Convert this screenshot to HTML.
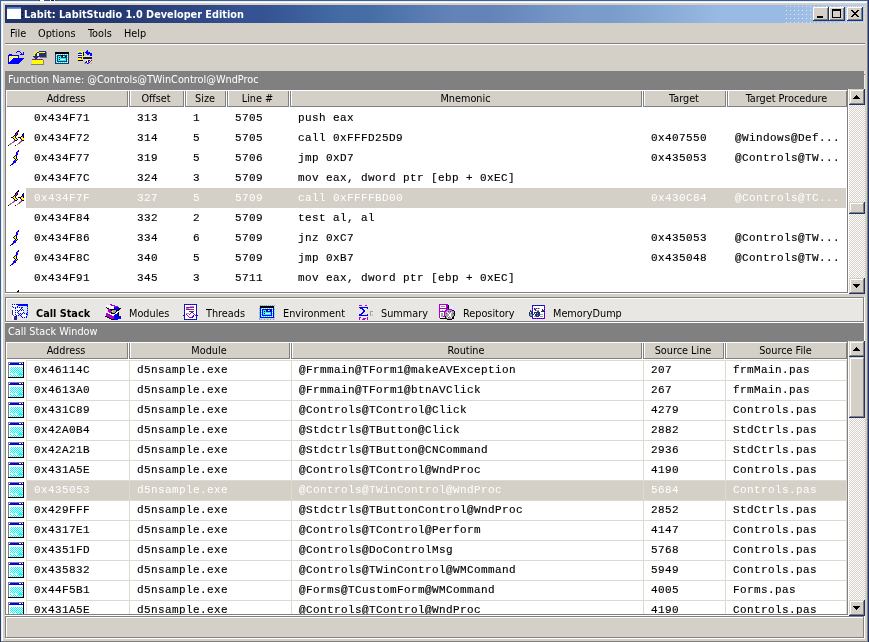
<!DOCTYPE html>
<html><head><meta charset="utf-8"><title>Labit: LabitStudio 1.0 Developer Edition</title>
<style>
html,body{margin:0;padding:0;background:#d4d0c8;}
#w{will-change:transform;position:relative;width:869px;height:642px;overflow:hidden;background:#d4d0c8;}
#w div,#w span,#w svg{position:absolute;}
#w span{white-space:pre;margin-left:-1px;line-height:14px;height:14px;display:block;}
#w .ui{font-family:"DejaVu Sans Condensed","Liberation Sans",sans-serif;font-size:10.8px;color:#000;margin-top:-10px;}
#w .ub{font-family:"DejaVu Sans Condensed","Liberation Sans",sans-serif;font-size:10.8px;font-weight:bold;color:#000;margin-top:-10px;}
#w .tb{font-family:"DejaVu Sans Condensed","Liberation Sans",sans-serif;font-size:10.8px;font-weight:bold;color:#fff;margin-top:-10px;}
#w .hc{text-align:center;}
#w .mo{font-family:"Liberation Mono",monospace;font-size:11px;letter-spacing:0.4px;color:#000;margin-top:-10px;margin-left:0;-webkit-text-stroke:0.15px;}
</style></head><body>
<div id="w">
<svg width="0" height="0" style="left:0;top:0"><defs><pattern id="d1" width="4" height="4" patternUnits="userSpaceOnUse"><rect x="1" y="1" width="1" height="1" fill="#e6e8ea"/></pattern><pattern id="d2" width="4" height="4" patternUnits="userSpaceOnUse"><rect x="1" y="1" width="1" height="1" fill="#e6e8ea"/><rect x="3" y="3" width="1" height="1" fill="#e6e8ea"/></pattern><pattern id="d3" width="2" height="2" patternUnits="userSpaceOnUse"><rect x="1" y="1" width="1" height="1" fill="#ece9d8"/></pattern><pattern id="ck" width="2" height="2" patternUnits="userSpaceOnUse"><rect width="2" height="2" fill="#fff"/><rect x="0" y="0" width="1" height="1" fill="#00ffff"/><rect x="1" y="1" width="1" height="1" fill="#00ffff"/></pattern></defs></svg>
<div style="left:0px;top:0px;width:869px;height:642px;background:#d4d0c8;"></div>
<div style="left:0px;top:0px;width:869px;height:1px;background:#3562a6;"></div>
<div style="left:0px;top:0px;width:1px;height:642px;background:linear-gradient(to bottom,#3562a6 0%,#3461a4 50%,#1e3c7c 100%);"></div>
<div style="left:1px;top:1px;width:866px;height:1px;background:#efebe0;"></div>
<div style="left:1px;top:1px;width:1px;height:640px;background:#efebe0;"></div>
<div style="left:2px;top:2px;width:865px;height:1px;background:#ffffff;"></div>
<div style="left:2px;top:2px;width:1px;height:639px;background:#ffffff;"></div>
<div style="left:867px;top:1px;width:1px;height:641px;background:#808080;"></div>
<div style="left:868px;top:0px;width:1px;height:642px;background:#21336a;"></div>
<div style="left:1px;top:641px;width:867px;height:1px;background:#808080;"></div>
<div style="left:39px;top:0px;width:1px;height:1px;background:#21336a;"></div>
<div style="left:40px;top:0px;width:4px;height:1px;background:#ffffff;"></div>
<div style="left:44px;top:0px;width:6px;height:1px;background:#2a4a90;"></div>
<div style="left:50px;top:0px;width:1px;height:1px;background:#e8eef8;"></div>
<div style="left:51px;top:0px;width:3px;height:1px;background:#0a1a5a;"></div>
<div style="left:54px;top:0px;width:1px;height:1px;background:#e8eef8;"></div>
<div style="left:55px;top:0px;width:2px;height:1px;background:#2a4a90;"></div>
<div style="left:5px;top:5px;width:860px;height:18px;background:linear-gradient(to right,#22346a 0px,#22346a 85px,#355293 245px,#355293 257px,#446da5 340px,#446da5 360px,#6484b9 450px,#6484b9 485px,#7a9ccb 580px,#7a9ccb 605px,#98bae3 717px,#98bae3 780px,#b2cbec 860px);"></div>
<svg style="left:785px;top:5px" width="80" height="18" viewBox="0 0 80 18" shape-rendering="crispEdges"><rect x="0" y="0" width="28" height="18" fill="url(#d1)"/><rect x="28" y="0" width="26" height="18" fill="url(#d2)"/><rect x="54" y="0" width="26" height="18" fill="url(#d3)"/></svg>
<div style="left:7px;top:7px;width:14px;height:12px;background:#ffffff;"></div>
<div style="left:7px;top:7px;width:14px;height:2px;background:linear-gradient(to bottom,#3f6db5,#7aa6e0);"></div>
<div style="left:22px;top:12px;width:1px;height:1px;background:#000;"></div>
<div style="left:22px;top:16px;width:1px;height:1px;background:#000;"></div>
<span class="tb" style="left:25px;top:18px;">Labit: LabitStudio 1.0 Developer Edition</span>
<div style="left:813px;top:7px;width:16px;height:14px;background:#d4d0c8;"></div>
<div style="left:813px;top:7px;width:15px;height:1px;background:#ffffff;"></div>
<div style="left:813px;top:7px;width:1px;height:13px;background:#ffffff;"></div>
<div style="left:814px;top:19px;width:14px;height:1px;background:#808080;"></div>
<div style="left:827px;top:8px;width:1px;height:12px;background:#808080;"></div>
<div style="left:813px;top:20px;width:16px;height:1px;background:#21336a;"></div>
<div style="left:828px;top:7px;width:1px;height:14px;background:#21336a;"></div>
<div style="left:829px;top:7px;width:16px;height:14px;background:#d4d0c8;"></div>
<div style="left:829px;top:7px;width:15px;height:1px;background:#ffffff;"></div>
<div style="left:829px;top:7px;width:1px;height:13px;background:#ffffff;"></div>
<div style="left:830px;top:19px;width:14px;height:1px;background:#808080;"></div>
<div style="left:843px;top:8px;width:1px;height:12px;background:#808080;"></div>
<div style="left:829px;top:20px;width:16px;height:1px;background:#21336a;"></div>
<div style="left:844px;top:7px;width:1px;height:14px;background:#21336a;"></div>
<div style="left:847px;top:7px;width:16px;height:14px;background:#d4d0c8;"></div>
<div style="left:847px;top:7px;width:15px;height:1px;background:#ffffff;"></div>
<div style="left:847px;top:7px;width:1px;height:13px;background:#ffffff;"></div>
<div style="left:848px;top:19px;width:14px;height:1px;background:#808080;"></div>
<div style="left:861px;top:8px;width:1px;height:12px;background:#808080;"></div>
<div style="left:847px;top:20px;width:16px;height:1px;background:#21336a;"></div>
<div style="left:862px;top:7px;width:1px;height:14px;background:#21336a;"></div>
<div style="left:817px;top:16px;width:6px;height:2px;background:#000;"></div>
<div style="left:832px;top:9px;width:9px;height:9px;background:#000;"></div>
<div style="left:833px;top:11px;width:7px;height:6px;background:#d4d0c8;"></div>
<svg style="left:851px;top:10px" width="8" height="7" viewBox="0 0 8 7" shape-rendering="crispEdges"><path d="M0 0h2v1h1v1h2v-1h1v-1h2v1h-1v1h-1v1h-1v1h1v1h1v1h1v1h-2v-1h-1v-1h-2v1h-1v1h-2v-1h1v-1h1v-1h1v-1h-1v-1h-1v-1h-1z" fill="#000"/></svg>
<span class="ui" style="left:11px;top:37px;">File</span>
<span class="ui" style="left:39px;top:37px;">Options</span>
<span class="ui" style="left:89px;top:37px;">Tools</span>
<span class="ui" style="left:125px;top:37px;">Help</span>
<div style="left:5px;top:43px;width:860px;height:1px;background:#808080;"></div>
<div style="left:5px;top:44px;width:860px;height:1px;background:#ffffff;"></div>
<div style="left:5px;top:71px;width:859px;height:19px;background:#808080;"></div>
<div style="left:864px;top:71px;width:1px;height:18px;background:#eeece6;"></div>
<div style="left:864px;top:74px;width:1px;height:1px;background:#808080;"></div>
<span class="ui" style="left:9px;top:83px;color:#ffffff;">Function Name: @Controls@TWinControl@WndProc</span>
<div style="left:5px;top:323px;width:859px;height:19px;background:#808080;"></div>
<div style="left:864px;top:323px;width:1px;height:18px;background:#ffffff;"></div>
<span class="ui" style="left:9px;top:335px;color:#ffffff;">Call Stack Window</span>
<div style="left:5px;top:89px;width:844px;height:205px;background:#ffffff;"></div>
<div style="left:5px;top:89px;width:844px;height:1px;background:#808080;"></div>
<div style="left:5px;top:89px;width:1px;height:205px;background:#808080;"></div>
<div style="left:6px;top:90px;width:842px;height:1px;background:#ffffff;"></div>
<div style="left:6px;top:90px;width:1px;height:203px;background:#ffffff;"></div>
<div style="left:6px;top:292px;width:842px;height:1px;background:#808080;"></div>
<div style="left:847px;top:90px;width:1px;height:203px;background:#808080;"></div>
<div style="left:5px;top:293px;width:844px;height:1px;background:#ffffff;"></div>
<div style="left:848px;top:89px;width:1px;height:205px;background:#ffffff;"></div>
<div style="left:7px;top:90px;width:840px;height:1px;background:#ffffff;"></div>
<div style="left:7px;top:91px;width:840px;height:15px;background:#d4d0c8;"></div>
<div style="left:7px;top:106px;width:840px;height:1px;background:#808080;"></div>
<div style="left:127px;top:91px;width:1px;height:16px;background:#808080;"></div>
<div style="left:128px;top:90px;width:1px;height:17px;background:#ffffff;"></div>
<div style="left:129px;top:91px;width:1px;height:16px;background:#808080;"></div>
<div style="left:130px;top:90px;width:1px;height:16px;background:#ffffff;"></div>
<div style="left:183px;top:91px;width:1px;height:16px;background:#808080;"></div>
<div style="left:184px;top:90px;width:1px;height:17px;background:#ffffff;"></div>
<div style="left:185px;top:91px;width:1px;height:16px;background:#808080;"></div>
<div style="left:186px;top:90px;width:1px;height:16px;background:#ffffff;"></div>
<div style="left:225px;top:91px;width:1px;height:16px;background:#808080;"></div>
<div style="left:226px;top:90px;width:1px;height:17px;background:#ffffff;"></div>
<div style="left:227px;top:91px;width:1px;height:16px;background:#808080;"></div>
<div style="left:228px;top:90px;width:1px;height:16px;background:#ffffff;"></div>
<div style="left:288px;top:91px;width:1px;height:16px;background:#808080;"></div>
<div style="left:289px;top:90px;width:1px;height:17px;background:#ffffff;"></div>
<div style="left:290px;top:91px;width:1px;height:16px;background:#808080;"></div>
<div style="left:291px;top:90px;width:1px;height:16px;background:#ffffff;"></div>
<div style="left:641px;top:91px;width:1px;height:16px;background:#808080;"></div>
<div style="left:642px;top:90px;width:1px;height:17px;background:#ffffff;"></div>
<div style="left:643px;top:91px;width:1px;height:16px;background:#808080;"></div>
<div style="left:644px;top:90px;width:1px;height:16px;background:#ffffff;"></div>
<div style="left:725px;top:91px;width:1px;height:16px;background:#808080;"></div>
<div style="left:726px;top:90px;width:1px;height:17px;background:#ffffff;"></div>
<div style="left:727px;top:91px;width:1px;height:16px;background:#808080;"></div>
<div style="left:728px;top:90px;width:1px;height:16px;background:#ffffff;"></div>
<div style="left:846px;top:91px;width:1px;height:16px;background:#808080;"></div>
<span class="ui hc" style="left:7px;width:120px;top:102px">Address</span>
<span class="ui hc" style="left:131px;width:52px;top:102px">Offset</span>
<span class="ui hc" style="left:187px;width:38px;top:102px">Size</span>
<span class="ui hc" style="left:229px;width:59px;top:102px">Line #</span>
<span class="ui hc" style="left:292px;width:349px;top:102px">Mnemonic</span>
<span class="ui hc" style="left:645px;width:80px;top:102px">Target</span>
<span class="ui hc" style="left:729px;width:117px;top:102px">Target Procedure</span>
<div style="left:849px;top:89px;width:16px;height:205px;background:#fff;background-image:conic-gradient(#d4d0c8 25%,#fff 0 50%,#d4d0c8 0 75%,#fff 0);background-size:2px 2px;"></div>
<div style="left:849px;top:89px;width:16px;height:16px;background:#d4d0c8;"></div>
<div style="left:849px;top:89px;width:15px;height:1px;background:#d4d0c8;"></div>
<div style="left:849px;top:89px;width:1px;height:15px;background:#d4d0c8;"></div>
<div style="left:850px;top:90px;width:13px;height:1px;background:#ffffff;"></div>
<div style="left:850px;top:90px;width:1px;height:13px;background:#ffffff;"></div>
<div style="left:850px;top:103px;width:14px;height:1px;background:#808080;"></div>
<div style="left:863px;top:90px;width:1px;height:14px;background:#808080;"></div>
<div style="left:849px;top:104px;width:16px;height:1px;background:#21336a;"></div>
<div style="left:864px;top:89px;width:1px;height:16px;background:#21336a;"></div>
<div style="left:849px;top:278px;width:16px;height:16px;background:#d4d0c8;"></div>
<div style="left:849px;top:278px;width:15px;height:1px;background:#d4d0c8;"></div>
<div style="left:849px;top:278px;width:1px;height:15px;background:#d4d0c8;"></div>
<div style="left:850px;top:279px;width:13px;height:1px;background:#ffffff;"></div>
<div style="left:850px;top:279px;width:1px;height:13px;background:#ffffff;"></div>
<div style="left:850px;top:292px;width:14px;height:1px;background:#808080;"></div>
<div style="left:863px;top:279px;width:1px;height:14px;background:#808080;"></div>
<div style="left:849px;top:293px;width:16px;height:1px;background:#21336a;"></div>
<div style="left:864px;top:278px;width:1px;height:16px;background:#21336a;"></div>
<div style="left:849px;top:202px;width:16px;height:12px;background:#d4d0c8;"></div>
<div style="left:849px;top:202px;width:15px;height:1px;background:#d4d0c8;"></div>
<div style="left:849px;top:202px;width:1px;height:11px;background:#d4d0c8;"></div>
<div style="left:850px;top:203px;width:13px;height:1px;background:#ffffff;"></div>
<div style="left:850px;top:203px;width:1px;height:9px;background:#ffffff;"></div>
<div style="left:850px;top:212px;width:14px;height:1px;background:#808080;"></div>
<div style="left:863px;top:203px;width:1px;height:10px;background:#808080;"></div>
<div style="left:849px;top:213px;width:16px;height:1px;background:#21336a;"></div>
<div style="left:864px;top:202px;width:1px;height:12px;background:#21336a;"></div>
<div style="left:856px;top:95px;width:1px;height:1px;background:#000;"></div>
<div style="left:856px;top:287px;width:1px;height:1px;background:#000;"></div>
<div style="left:855px;top:96px;width:3px;height:1px;background:#000;"></div>
<div style="left:855px;top:286px;width:3px;height:1px;background:#000;"></div>
<div style="left:854px;top:97px;width:5px;height:1px;background:#000;"></div>
<div style="left:854px;top:285px;width:5px;height:1px;background:#000;"></div>
<div style="left:853px;top:98px;width:7px;height:1px;background:#000;"></div>
<div style="left:853px;top:284px;width:7px;height:1px;background:#000;"></div>
<span class="mo" style="left:34px;top:121px;color:#000;">0x434F71</span>
<span class="mo" style="left:137px;top:121px;color:#000;">313</span>
<span class="mo" style="left:193px;top:121px;color:#000;">1</span>
<span class="mo" style="left:235px;top:121px;color:#000;">5705</span>
<span class="mo" style="left:298px;top:121px;color:#000;">push eax</span>
<svg style="left:8px;top:130px" width="16" height="16" viewBox="0 0 16 16" shape-rendering="crispEdges"><rect x="10" y="0" width="1" height="1" fill="#000000"/><rect x="9" y="1" width="2" height="1" fill="#000000"/><rect x="8" y="2" width="1" height="1" fill="#000000"/><rect x="9" y="2" width="1" height="1" fill="#d000d8"/><rect x="7" y="3" width="1" height="1" fill="#000000"/><rect x="8" y="3" width="1" height="1" fill="#d000d8"/><rect x="9" y="3" width="1" height="1" fill="#000000"/><rect x="15" y="3" width="1" height="1" fill="#000000"/><rect x="7" y="4" width="1" height="1" fill="#000000"/><rect x="8" y="4" width="1" height="1" fill="#d000d8"/><rect x="9" y="4" width="1" height="1" fill="#000000"/><rect x="14" y="4" width="1" height="1" fill="#000000"/><rect x="15" y="4" width="1" height="1" fill="#0000ff"/><rect x="6" y="5" width="1" height="1" fill="#000000"/><rect x="7" y="5" width="1" height="1" fill="#d000d8"/><rect x="8" y="5" width="1" height="1" fill="#000000"/><rect x="14" y="5" width="1" height="1" fill="#000000"/><rect x="15" y="5" width="1" height="1" fill="#0000ff"/><rect x="5" y="6" width="1" height="1" fill="#000000"/><rect x="6" y="6" width="1" height="1" fill="#ffff00"/><rect x="7" y="6" width="1" height="1" fill="#000000"/><rect x="13" y="6" width="1" height="1" fill="#000000"/><rect x="14" y="6" width="1" height="1" fill="#d000d8"/><rect x="15" y="6" width="1" height="1" fill="#000000"/><rect x="3" y="7" width="2" height="1" fill="#000000"/><rect x="5" y="7" width="2" height="1" fill="#ffff00"/><rect x="7" y="7" width="1" height="1" fill="#000000"/><rect x="10" y="7" width="3" height="1" fill="#000000"/><rect x="13" y="7" width="2" height="1" fill="#ffff00"/><rect x="15" y="7" width="1" height="1" fill="#000000"/><rect x="5" y="8" width="1" height="1" fill="#000000"/><rect x="6" y="8" width="2" height="1" fill="#ffff00"/><rect x="8" y="8" width="1" height="1" fill="#000000"/><rect x="12" y="8" width="1" height="1" fill="#000000"/><rect x="13" y="8" width="3" height="1" fill="#ffff00"/><rect x="6" y="9" width="1" height="1" fill="#000000"/><rect x="7" y="9" width="2" height="1" fill="#ffff00"/><rect x="9" y="9" width="1" height="1" fill="#000000"/><rect x="13" y="9" width="1" height="1" fill="#000000"/><rect x="14" y="9" width="2" height="1" fill="#ffff00"/><rect x="6" y="10" width="1" height="1" fill="#d000d8"/><rect x="7" y="10" width="2" height="1" fill="#000000"/><rect x="13" y="10" width="1" height="1" fill="#d000d8"/><rect x="14" y="10" width="2" height="1" fill="#000000"/><rect x="5" y="11" width="1" height="1" fill="#808080"/><rect x="6" y="11" width="1" height="1" fill="#d000d8"/><rect x="12" y="11" width="1" height="1" fill="#808080"/><rect x="13" y="11" width="1" height="1" fill="#d000d8"/><rect x="4" y="12" width="1" height="1" fill="#d000d8"/><rect x="5" y="12" width="1" height="1" fill="#808080"/><rect x="11" y="12" width="1" height="1" fill="#d000d8"/><rect x="12" y="12" width="1" height="1" fill="#808080"/><rect x="2" y="13" width="2" height="1" fill="#808080"/><rect x="10" y="13" width="2" height="1" fill="#808080"/><rect x="1" y="14" width="2" height="1" fill="#808080"/><rect x="9" y="14" width="1" height="1" fill="#808080"/><rect x="0" y="15" width="1" height="1" fill="#000000"/><rect x="7" y="15" width="1" height="1" fill="#000000"/></svg>
<span class="mo" style="left:34px;top:141px;color:#000;">0x434F72</span>
<span class="mo" style="left:137px;top:141px;color:#000;">314</span>
<span class="mo" style="left:193px;top:141px;color:#000;">5</span>
<span class="mo" style="left:235px;top:141px;color:#000;">5705</span>
<span class="mo" style="left:298px;top:141px;color:#000;">call 0xFFFD25D9</span>
<span class="mo" style="left:651px;top:141px;color:#000;">0x407550</span>
<span class="mo" style="left:735px;top:141px;color:#000;">@Windows@Def...</span>
<svg style="left:8px;top:150px" width="16" height="16" viewBox="0 0 16 16" shape-rendering="crispEdges"><rect x="10" y="0" width="1" height="1" fill="#0000ff"/><rect x="9" y="1" width="2" height="1" fill="#0000ff"/><rect x="8" y="2" width="1" height="1" fill="#0000ff"/><rect x="9" y="2" width="1" height="1" fill="#d000d8"/><rect x="8" y="3" width="2" height="1" fill="#0000ff"/><rect x="8" y="4" width="2" height="1" fill="#0000ff"/><rect x="7" y="5" width="2" height="1" fill="#0000ff"/><rect x="6" y="6" width="1" height="1" fill="#000000"/><rect x="7" y="6" width="1" height="1" fill="#ffff00"/><rect x="8" y="6" width="1" height="1" fill="#000000"/><rect x="5" y="7" width="1" height="1" fill="#000000"/><rect x="6" y="7" width="2" height="1" fill="#ffff00"/><rect x="8" y="7" width="1" height="1" fill="#000000"/><rect x="6" y="8" width="1" height="1" fill="#000000"/><rect x="7" y="8" width="1" height="1" fill="#ffff00"/><rect x="8" y="8" width="1" height="1" fill="#000000"/><rect x="7" y="9" width="1" height="1" fill="#000000"/><rect x="8" y="9" width="1" height="1" fill="#ffff00"/><rect x="9" y="9" width="1" height="1" fill="#000000"/><rect x="6" y="10" width="1" height="1" fill="#0000ff"/><rect x="7" y="10" width="1" height="1" fill="#d000d8"/><rect x="8" y="10" width="1" height="1" fill="#000000"/><rect x="5" y="11" width="3" height="1" fill="#0000ff"/><rect x="5" y="12" width="3" height="1" fill="#0000ff"/><rect x="4" y="13" width="2" height="1" fill="#0000ff"/><rect x="3" y="14" width="2" height="1" fill="#0000ff"/><rect x="2" y="15" width="1" height="1" fill="#000000"/></svg>
<span class="mo" style="left:34px;top:161px;color:#000;">0x434F77</span>
<span class="mo" style="left:137px;top:161px;color:#000;">319</span>
<span class="mo" style="left:193px;top:161px;color:#000;">5</span>
<span class="mo" style="left:235px;top:161px;color:#000;">5706</span>
<span class="mo" style="left:298px;top:161px;color:#000;">jmp 0xD7</span>
<span class="mo" style="left:651px;top:161px;color:#000;">0x435053</span>
<span class="mo" style="left:735px;top:161px;color:#000;">@Controls@TW...</span>
<span class="mo" style="left:34px;top:181px;color:#000;">0x434F7C</span>
<span class="mo" style="left:137px;top:181px;color:#000;">324</span>
<span class="mo" style="left:193px;top:181px;color:#000;">3</span>
<span class="mo" style="left:235px;top:181px;color:#000;">5709</span>
<span class="mo" style="left:298px;top:181px;color:#000;">mov eax, dword ptr [ebp + 0xEC]</span>
<div style="left:26px;top:188px;width:820px;height:20px;background:#d4d0c8;"></div>
<svg style="left:8px;top:190px" width="16" height="16" viewBox="0 0 16 16" shape-rendering="crispEdges"><rect x="10" y="0" width="1" height="1" fill="#000000"/><rect x="9" y="1" width="2" height="1" fill="#000000"/><rect x="8" y="2" width="1" height="1" fill="#000000"/><rect x="9" y="2" width="1" height="1" fill="#d000d8"/><rect x="7" y="3" width="1" height="1" fill="#000000"/><rect x="8" y="3" width="1" height="1" fill="#d000d8"/><rect x="9" y="3" width="1" height="1" fill="#000000"/><rect x="15" y="3" width="1" height="1" fill="#000000"/><rect x="7" y="4" width="1" height="1" fill="#000000"/><rect x="8" y="4" width="1" height="1" fill="#d000d8"/><rect x="9" y="4" width="1" height="1" fill="#000000"/><rect x="14" y="4" width="1" height="1" fill="#000000"/><rect x="15" y="4" width="1" height="1" fill="#0000ff"/><rect x="6" y="5" width="1" height="1" fill="#000000"/><rect x="7" y="5" width="1" height="1" fill="#d000d8"/><rect x="8" y="5" width="1" height="1" fill="#000000"/><rect x="14" y="5" width="1" height="1" fill="#000000"/><rect x="15" y="5" width="1" height="1" fill="#0000ff"/><rect x="5" y="6" width="1" height="1" fill="#000000"/><rect x="6" y="6" width="1" height="1" fill="#ffff00"/><rect x="7" y="6" width="1" height="1" fill="#000000"/><rect x="13" y="6" width="1" height="1" fill="#000000"/><rect x="14" y="6" width="1" height="1" fill="#d000d8"/><rect x="15" y="6" width="1" height="1" fill="#000000"/><rect x="3" y="7" width="2" height="1" fill="#000000"/><rect x="5" y="7" width="2" height="1" fill="#ffff00"/><rect x="7" y="7" width="1" height="1" fill="#000000"/><rect x="10" y="7" width="3" height="1" fill="#000000"/><rect x="13" y="7" width="2" height="1" fill="#ffff00"/><rect x="15" y="7" width="1" height="1" fill="#000000"/><rect x="5" y="8" width="1" height="1" fill="#000000"/><rect x="6" y="8" width="2" height="1" fill="#ffff00"/><rect x="8" y="8" width="1" height="1" fill="#000000"/><rect x="12" y="8" width="1" height="1" fill="#000000"/><rect x="13" y="8" width="3" height="1" fill="#ffff00"/><rect x="6" y="9" width="1" height="1" fill="#000000"/><rect x="7" y="9" width="2" height="1" fill="#ffff00"/><rect x="9" y="9" width="1" height="1" fill="#000000"/><rect x="13" y="9" width="1" height="1" fill="#000000"/><rect x="14" y="9" width="2" height="1" fill="#ffff00"/><rect x="6" y="10" width="1" height="1" fill="#d000d8"/><rect x="7" y="10" width="2" height="1" fill="#000000"/><rect x="13" y="10" width="1" height="1" fill="#d000d8"/><rect x="14" y="10" width="2" height="1" fill="#000000"/><rect x="5" y="11" width="1" height="1" fill="#808080"/><rect x="6" y="11" width="1" height="1" fill="#d000d8"/><rect x="12" y="11" width="1" height="1" fill="#808080"/><rect x="13" y="11" width="1" height="1" fill="#d000d8"/><rect x="4" y="12" width="1" height="1" fill="#d000d8"/><rect x="5" y="12" width="1" height="1" fill="#808080"/><rect x="11" y="12" width="1" height="1" fill="#d000d8"/><rect x="12" y="12" width="1" height="1" fill="#808080"/><rect x="2" y="13" width="2" height="1" fill="#808080"/><rect x="10" y="13" width="2" height="1" fill="#808080"/><rect x="1" y="14" width="2" height="1" fill="#808080"/><rect x="9" y="14" width="1" height="1" fill="#808080"/><rect x="0" y="15" width="1" height="1" fill="#000000"/><rect x="7" y="15" width="1" height="1" fill="#000000"/></svg>
<span class="mo" style="left:34px;top:201px;color:#fff;-webkit-text-stroke:0;">0x434F7F</span>
<span class="mo" style="left:137px;top:201px;color:#fff;-webkit-text-stroke:0;">327</span>
<span class="mo" style="left:193px;top:201px;color:#fff;-webkit-text-stroke:0;">5</span>
<span class="mo" style="left:235px;top:201px;color:#fff;-webkit-text-stroke:0;">5709</span>
<span class="mo" style="left:298px;top:201px;color:#fff;-webkit-text-stroke:0;">call 0xFFFFBD00</span>
<span class="mo" style="left:651px;top:201px;color:#fff;-webkit-text-stroke:0;">0x430C84</span>
<span class="mo" style="left:735px;top:201px;color:#fff;-webkit-text-stroke:0;">@Controls@TC...</span>
<span class="mo" style="left:34px;top:221px;color:#000;">0x434F84</span>
<span class="mo" style="left:137px;top:221px;color:#000;">332</span>
<span class="mo" style="left:193px;top:221px;color:#000;">2</span>
<span class="mo" style="left:235px;top:221px;color:#000;">5709</span>
<span class="mo" style="left:298px;top:221px;color:#000;">test al, al</span>
<svg style="left:8px;top:230px" width="16" height="16" viewBox="0 0 16 16" shape-rendering="crispEdges"><rect x="10" y="0" width="1" height="1" fill="#0000ff"/><rect x="9" y="1" width="2" height="1" fill="#0000ff"/><rect x="8" y="2" width="1" height="1" fill="#0000ff"/><rect x="9" y="2" width="1" height="1" fill="#d000d8"/><rect x="8" y="3" width="2" height="1" fill="#0000ff"/><rect x="8" y="4" width="2" height="1" fill="#0000ff"/><rect x="7" y="5" width="2" height="1" fill="#0000ff"/><rect x="6" y="6" width="1" height="1" fill="#000000"/><rect x="7" y="6" width="1" height="1" fill="#ffff00"/><rect x="8" y="6" width="1" height="1" fill="#000000"/><rect x="5" y="7" width="1" height="1" fill="#000000"/><rect x="6" y="7" width="2" height="1" fill="#ffff00"/><rect x="8" y="7" width="1" height="1" fill="#000000"/><rect x="6" y="8" width="1" height="1" fill="#000000"/><rect x="7" y="8" width="1" height="1" fill="#ffff00"/><rect x="8" y="8" width="1" height="1" fill="#000000"/><rect x="7" y="9" width="1" height="1" fill="#000000"/><rect x="8" y="9" width="1" height="1" fill="#ffff00"/><rect x="9" y="9" width="1" height="1" fill="#000000"/><rect x="6" y="10" width="1" height="1" fill="#0000ff"/><rect x="7" y="10" width="1" height="1" fill="#d000d8"/><rect x="8" y="10" width="1" height="1" fill="#000000"/><rect x="5" y="11" width="3" height="1" fill="#0000ff"/><rect x="5" y="12" width="3" height="1" fill="#0000ff"/><rect x="4" y="13" width="2" height="1" fill="#0000ff"/><rect x="3" y="14" width="2" height="1" fill="#0000ff"/><rect x="2" y="15" width="1" height="1" fill="#000000"/></svg>
<span class="mo" style="left:34px;top:241px;color:#000;">0x434F86</span>
<span class="mo" style="left:137px;top:241px;color:#000;">334</span>
<span class="mo" style="left:193px;top:241px;color:#000;">6</span>
<span class="mo" style="left:235px;top:241px;color:#000;">5709</span>
<span class="mo" style="left:298px;top:241px;color:#000;">jnz 0xC7</span>
<span class="mo" style="left:651px;top:241px;color:#000;">0x435053</span>
<span class="mo" style="left:735px;top:241px;color:#000;">@Controls@TW...</span>
<svg style="left:8px;top:250px" width="16" height="16" viewBox="0 0 16 16" shape-rendering="crispEdges"><rect x="10" y="0" width="1" height="1" fill="#0000ff"/><rect x="9" y="1" width="2" height="1" fill="#0000ff"/><rect x="8" y="2" width="1" height="1" fill="#0000ff"/><rect x="9" y="2" width="1" height="1" fill="#d000d8"/><rect x="8" y="3" width="2" height="1" fill="#0000ff"/><rect x="8" y="4" width="2" height="1" fill="#0000ff"/><rect x="7" y="5" width="2" height="1" fill="#0000ff"/><rect x="6" y="6" width="1" height="1" fill="#000000"/><rect x="7" y="6" width="1" height="1" fill="#ffff00"/><rect x="8" y="6" width="1" height="1" fill="#000000"/><rect x="5" y="7" width="1" height="1" fill="#000000"/><rect x="6" y="7" width="2" height="1" fill="#ffff00"/><rect x="8" y="7" width="1" height="1" fill="#000000"/><rect x="6" y="8" width="1" height="1" fill="#000000"/><rect x="7" y="8" width="1" height="1" fill="#ffff00"/><rect x="8" y="8" width="1" height="1" fill="#000000"/><rect x="7" y="9" width="1" height="1" fill="#000000"/><rect x="8" y="9" width="1" height="1" fill="#ffff00"/><rect x="9" y="9" width="1" height="1" fill="#000000"/><rect x="6" y="10" width="1" height="1" fill="#0000ff"/><rect x="7" y="10" width="1" height="1" fill="#d000d8"/><rect x="8" y="10" width="1" height="1" fill="#000000"/><rect x="5" y="11" width="3" height="1" fill="#0000ff"/><rect x="5" y="12" width="3" height="1" fill="#0000ff"/><rect x="4" y="13" width="2" height="1" fill="#0000ff"/><rect x="3" y="14" width="2" height="1" fill="#0000ff"/><rect x="2" y="15" width="1" height="1" fill="#000000"/></svg>
<span class="mo" style="left:34px;top:261px;color:#000;">0x434F8C</span>
<span class="mo" style="left:137px;top:261px;color:#000;">340</span>
<span class="mo" style="left:193px;top:261px;color:#000;">5</span>
<span class="mo" style="left:235px;top:261px;color:#000;">5709</span>
<span class="mo" style="left:298px;top:261px;color:#000;">jmp 0xB7</span>
<span class="mo" style="left:651px;top:261px;color:#000;">0x435048</span>
<span class="mo" style="left:735px;top:261px;color:#000;">@Controls@TW...</span>
<span class="mo" style="left:34px;top:281px;color:#000;">0x434F91</span>
<span class="mo" style="left:137px;top:281px;color:#000;">345</span>
<span class="mo" style="left:193px;top:281px;color:#000;">3</span>
<span class="mo" style="left:235px;top:281px;color:#000;">5711</span>
<span class="mo" style="left:298px;top:281px;color:#000;">mov eax, dword ptr [ebp + 0xEC]</span>
<div style="left:17px;top:291px;width:2px;height:1px;background:#000;"></div>
<div style="left:18px;top:290px;width:1px;height:1px;background:#000;"></div>
<div style="left:5px;top:297px;width:860px;height:26px;background:#e9e7e3;"></div>
<div style="left:5px;top:297px;width:860px;height:1px;background:#808080;"></div>
<div style="left:5px;top:297px;width:1px;height:26px;background:#808080;"></div>
<div style="left:6px;top:298px;width:858px;height:1px;background:#ffffff;"></div>
<div style="left:6px;top:298px;width:1px;height:24px;background:#ffffff;"></div>
<div style="left:6px;top:321px;width:858px;height:1px;background:#808080;"></div>
<div style="left:863px;top:298px;width:1px;height:24px;background:#808080;"></div>
<div style="left:5px;top:322px;width:860px;height:1px;background:#ffffff;"></div>
<div style="left:864px;top:297px;width:1px;height:26px;background:#ffffff;"></div>
<svg style="left:12px;top:304px" width="16" height="16" viewBox="0 0 16 16" shape-rendering="crispEdges"><rect x="0" y="0" width="1" height="1" fill="#0000ff"/><rect x="1" y="0" width="1" height="1" fill="#dce8fa"/><rect x="2" y="0" width="1" height="1" fill="#0000ff"/><rect x="3" y="0" width="1" height="1" fill="#dce8fa"/><rect x="4" y="0" width="12" height="1" fill="#0000ff"/><rect x="0" y="1" width="1" height="1" fill="#dce8fa"/><rect x="1" y="1" width="4" height="1" fill="#ffffff"/><rect x="5" y="1" width="1" height="1" fill="#dce8fa"/><rect x="6" y="1" width="10" height="1" fill="#0000ff"/><rect x="0" y="2" width="1" height="1" fill="#0000ff"/><rect x="1" y="2" width="4" height="1" fill="#ffffff"/><rect x="5" y="2" width="1" height="1" fill="#0000ff"/><rect x="6" y="2" width="9" height="1" fill="#dce8fa"/><rect x="15" y="2" width="1" height="1" fill="#0000ff"/><rect x="0" y="3" width="1" height="1" fill="#dce8fa"/><rect x="1" y="3" width="1" height="1" fill="#0000ff"/><rect x="2" y="3" width="1" height="1" fill="#dce8fa"/><rect x="3" y="3" width="1" height="1" fill="#0000ff"/><rect x="4" y="3" width="1" height="1" fill="#dce8fa"/><rect x="5" y="3" width="1" height="1" fill="#0000ff"/><rect x="6" y="3" width="1" height="1" fill="#dce8fa"/><rect x="7" y="3" width="1" height="1" fill="#0000ff"/><rect x="8" y="3" width="1" height="1" fill="#dce8fa"/><rect x="9" y="3" width="2" height="1" fill="#21336a"/><rect x="11" y="3" width="4" height="1" fill="#dce8fa"/><rect x="15" y="3" width="1" height="1" fill="#78a8f0"/><rect x="0" y="4" width="3" height="1" fill="#ffffff"/><rect x="3" y="4" width="1" height="1" fill="#0000ff"/><rect x="4" y="4" width="4" height="1" fill="#ffffff"/><rect x="8" y="4" width="1" height="1" fill="#dce8fa"/><rect x="9" y="4" width="1" height="1" fill="#21336a"/><rect x="10" y="4" width="5" height="1" fill="#dce8fa"/><rect x="15" y="4" width="1" height="1" fill="#0000ff"/><rect x="0" y="5" width="3" height="1" fill="#ffffff"/><rect x="3" y="5" width="1" height="1" fill="#dce8fa"/><rect x="4" y="5" width="4" height="1" fill="#ffffff"/><rect x="8" y="5" width="1" height="1" fill="#0000ff"/><rect x="9" y="5" width="1" height="1" fill="#dce8fa"/><rect x="10" y="5" width="1" height="1" fill="#21336a"/><rect x="11" y="5" width="4" height="1" fill="#dce8fa"/><rect x="15" y="5" width="1" height="1" fill="#78a8f0"/><rect x="0" y="6" width="1" height="1" fill="#21336a"/><rect x="1" y="6" width="2" height="1" fill="#ffffff"/><rect x="3" y="6" width="1" height="1" fill="#0000ff"/><rect x="4" y="6" width="1" height="1" fill="#dce8fa"/><rect x="5" y="6" width="1" height="1" fill="#0000ff"/><rect x="6" y="6" width="1" height="1" fill="#dce8fa"/><rect x="7" y="6" width="1" height="1" fill="#0000ff"/><rect x="8" y="6" width="1" height="1" fill="#dce8fa"/><rect x="9" y="6" width="1" height="1" fill="#0000ff"/><rect x="10" y="6" width="1" height="1" fill="#dce8fa"/><rect x="11" y="6" width="1" height="1" fill="#21336a"/><rect x="12" y="6" width="3" height="1" fill="#dce8fa"/><rect x="15" y="6" width="1" height="1" fill="#0000ff"/><rect x="0" y="7" width="1" height="1" fill="#21336a"/><rect x="1" y="7" width="2" height="1" fill="#ffffff"/><rect x="3" y="7" width="1" height="1" fill="#dce8fa"/><rect x="4" y="7" width="2" height="1" fill="#ffffff"/><rect x="6" y="7" width="1" height="1" fill="#0000ff"/><rect x="7" y="7" width="4" height="1" fill="#ffffff"/><rect x="11" y="7" width="4" height="1" fill="#dce8fa"/><rect x="15" y="7" width="1" height="1" fill="#78a8f0"/><rect x="0" y="8" width="1" height="1" fill="#21336a"/><rect x="1" y="8" width="2" height="1" fill="#ffffff"/><rect x="3" y="8" width="1" height="1" fill="#0000ff"/><rect x="4" y="8" width="1" height="1" fill="#ffffff"/><rect x="5" y="8" width="1" height="1" fill="#21336a"/><rect x="6" y="8" width="1" height="1" fill="#dce8fa"/><rect x="7" y="8" width="4" height="1" fill="#ffffff"/><rect x="11" y="8" width="1" height="1" fill="#0000ff"/><rect x="12" y="8" width="3" height="1" fill="#dce8fa"/><rect x="15" y="8" width="1" height="1" fill="#0000ff"/><rect x="0" y="9" width="1" height="1" fill="#21336a"/><rect x="1" y="9" width="2" height="1" fill="#ffffff"/><rect x="3" y="9" width="1" height="1" fill="#dce8fa"/><rect x="4" y="9" width="2" height="1" fill="#ffffff"/><rect x="6" y="9" width="1" height="1" fill="#0000ff"/><rect x="7" y="9" width="1" height="1" fill="#dce8fa"/><rect x="8" y="9" width="1" height="1" fill="#0000ff"/><rect x="9" y="9" width="1" height="1" fill="#dce8fa"/><rect x="10" y="9" width="1" height="1" fill="#0000ff"/><rect x="11" y="9" width="1" height="1" fill="#dce8fa"/><rect x="12" y="9" width="1" height="1" fill="#0000ff"/><rect x="13" y="9" width="1" height="1" fill="#dce8fa"/><rect x="14" y="9" width="1" height="1" fill="#0000ff"/><rect x="15" y="9" width="1" height="1" fill="#78a8f0"/><rect x="0" y="10" width="1" height="1" fill="#21336a"/><rect x="1" y="10" width="2" height="1" fill="#ffffff"/><rect x="3" y="10" width="1" height="1" fill="#0000ff"/><rect x="4" y="10" width="2" height="1" fill="#ffffff"/><rect x="6" y="10" width="1" height="1" fill="#dce8fa"/><rect x="7" y="10" width="1" height="1" fill="#0000ff"/><rect x="8" y="10" width="1" height="1" fill="#dce8fa"/><rect x="9" y="10" width="1" height="1" fill="#0000ff"/><rect x="10" y="10" width="4" height="1" fill="#ffffff"/><rect x="14" y="10" width="2" height="1" fill="#0000ff"/><rect x="0" y="11" width="1" height="1" fill="#ffffff"/><rect x="1" y="11" width="1" height="1" fill="#d000d8"/><rect x="2" y="11" width="1" height="1" fill="#ffffff"/><rect x="3" y="11" width="1" height="1" fill="#dce8fa"/><rect x="4" y="11" width="1" height="1" fill="#0000ff"/><rect x="5" y="11" width="1" height="1" fill="#dce8fa"/><rect x="6" y="11" width="1" height="1" fill="#0000ff"/><rect x="7" y="11" width="1" height="1" fill="#dce8fa"/><rect x="8" y="11" width="1" height="1" fill="#0000ff"/><rect x="9" y="11" width="1" height="1" fill="#dce8fa"/><rect x="10" y="11" width="4" height="1" fill="#ffffff"/><rect x="14" y="11" width="1" height="1" fill="#dce8fa"/><rect x="15" y="11" width="1" height="1" fill="#78a8f0"/><rect x="0" y="12" width="2" height="1" fill="#ffffff"/><rect x="2" y="12" width="1" height="1" fill="#d000d8"/><rect x="3" y="12" width="2" height="1" fill="#0000ff"/><rect x="9" y="12" width="1" height="1" fill="#0000ff"/><rect x="10" y="12" width="4" height="1" fill="#ffffff"/><rect x="14" y="12" width="1" height="1" fill="#0000ff"/><rect x="0" y="13" width="2" height="1" fill="#ffffff"/><rect x="2" y="13" width="2" height="1" fill="#21336a"/><rect x="4" y="13" width="1" height="1" fill="#0000ff"/><rect x="9" y="13" width="1" height="1" fill="#dce8fa"/><rect x="10" y="13" width="1" height="1" fill="#0000ff"/><rect x="11" y="13" width="1" height="1" fill="#dce8fa"/><rect x="12" y="13" width="1" height="1" fill="#0000ff"/><rect x="13" y="13" width="1" height="1" fill="#dce8fa"/><rect x="14" y="13" width="1" height="1" fill="#0000ff"/><rect x="0" y="14" width="2" height="1" fill="#ffffff"/><rect x="2" y="14" width="3" height="1" fill="#21336a"/><rect x="0" y="15" width="1" height="1" fill="#ffffff"/><rect x="2" y="15" width="3" height="1" fill="#21336a"/></svg>
<span class="ub" style="left:37px;top:317px;">Call Stack</span>
<svg style="left:105px;top:304px" width="16" height="16" viewBox="0 0 16 16" shape-rendering="crispEdges"><rect x="5" y="0" width="2" height="1" fill="#b000d0"/><rect x="1" y="1" width="5" height="1" fill="#ffffff"/><rect x="6" y="1" width="4" height="1" fill="#b000d0"/><rect x="1" y="2" width="8" height="1" fill="#ffffff"/><rect x="9" y="2" width="4" height="1" fill="#b000d0"/><rect x="1" y="3" width="1" height="1" fill="#000000"/><rect x="2" y="3" width="1" height="1" fill="#ffffff"/><rect x="3" y="3" width="1" height="1" fill="#dce8fa"/><rect x="4" y="3" width="1" height="1" fill="#ffffff"/><rect x="5" y="3" width="1" height="1" fill="#dce8fa"/><rect x="6" y="3" width="3" height="1" fill="#ffffff"/><rect x="9" y="3" width="5" height="1" fill="#0000ff"/><rect x="2" y="4" width="2" height="1" fill="#000000"/><rect x="4" y="4" width="5" height="1" fill="#ffffff"/><rect x="9" y="4" width="2" height="1" fill="#0000ff"/><rect x="11" y="4" width="1" height="1" fill="#101080"/><rect x="12" y="4" width="2" height="1" fill="#0000ff"/><rect x="14" y="4" width="2" height="1" fill="#000000"/><rect x="3" y="5" width="2" height="1" fill="#b000d0"/><rect x="5" y="5" width="5" height="1" fill="#000000"/><rect x="10" y="5" width="3" height="1" fill="#0000ff"/><rect x="13" y="5" width="2" height="1" fill="#000000"/><rect x="3" y="6" width="3" height="1" fill="#b000d0"/><rect x="6" y="6" width="1" height="1" fill="#000000"/><rect x="7" y="6" width="4" height="1" fill="#a0a0a0"/><rect x="11" y="6" width="3" height="1" fill="#000000"/><rect x="0" y="7" width="2" height="1" fill="#ffffff"/><rect x="3" y="7" width="3" height="1" fill="#b000d0"/><rect x="6" y="7" width="1" height="1" fill="#a0a0a0"/><rect x="7" y="7" width="1" height="1" fill="#ffff00"/><rect x="8" y="7" width="3" height="1" fill="#a0a0a0"/><rect x="11" y="7" width="1" height="1" fill="#000000"/><rect x="1" y="8" width="3" height="1" fill="#ffffff"/><rect x="4" y="8" width="2" height="1" fill="#b000d0"/><rect x="6" y="8" width="1" height="1" fill="#000000"/><rect x="7" y="8" width="3" height="1" fill="#a0a0a0"/><rect x="10" y="8" width="1" height="1" fill="#000000"/><rect x="11" y="8" width="2" height="1" fill="#ffffff"/><rect x="13" y="8" width="1" height="1" fill="#000000"/><rect x="1" y="9" width="2" height="1" fill="#b000d0"/><rect x="3" y="9" width="3" height="1" fill="#ffffff"/><rect x="6" y="9" width="4" height="1" fill="#000000"/><rect x="10" y="9" width="2" height="1" fill="#ffffff"/><rect x="12" y="9" width="1" height="1" fill="#0000ff"/><rect x="13" y="9" width="1" height="1" fill="#000000"/><rect x="1" y="10" width="4" height="1" fill="#b000d0"/><rect x="5" y="10" width="5" height="1" fill="#ffffff"/><rect x="10" y="10" width="3" height="1" fill="#0000ff"/><rect x="13" y="10" width="1" height="1" fill="#000000"/><rect x="1" y="11" width="6" height="1" fill="#b000d0"/><rect x="7" y="11" width="2" height="1" fill="#ffffff"/><rect x="9" y="11" width="4" height="1" fill="#0000ff"/><rect x="13" y="11" width="1" height="1" fill="#000000"/><rect x="0" y="12" width="2" height="1" fill="#000000"/><rect x="2" y="12" width="7" height="1" fill="#b000d0"/><rect x="9" y="12" width="1" height="1" fill="#0000ff"/><rect x="10" y="12" width="1" height="1" fill="#101080"/><rect x="11" y="12" width="2" height="1" fill="#0000ff"/><rect x="13" y="12" width="1" height="1" fill="#000000"/><rect x="14" y="12" width="2" height="1" fill="#0000ff"/><rect x="2" y="13" width="2" height="1" fill="#000000"/><rect x="4" y="13" width="5" height="1" fill="#b000d0"/><rect x="9" y="13" width="1" height="1" fill="#0000ff"/><rect x="10" y="13" width="1" height="1" fill="#101080"/><rect x="11" y="13" width="5" height="1" fill="#0000ff"/><rect x="4" y="14" width="2" height="1" fill="#000000"/><rect x="6" y="14" width="3" height="1" fill="#b000d0"/><rect x="9" y="14" width="7" height="1" fill="#0000ff"/><rect x="6" y="15" width="3" height="1" fill="#000000"/><rect x="9" y="15" width="4" height="1" fill="#0000ff"/></svg>
<span class="ui" style="left:130px;top:317px;">Modules</span>
<svg style="left:183px;top:304px" width="16" height="16" viewBox="0 0 16 16" shape-rendering="crispEdges"><rect x="1" y="0" width="1" height="1" fill="#0000ff"/><rect x="2" y="0" width="1" height="1" fill="#21336a"/><rect x="3" y="0" width="1" height="1" fill="#0000ff"/><rect x="4" y="0" width="1" height="1" fill="#21336a"/><rect x="5" y="0" width="1" height="1" fill="#0000ff"/><rect x="6" y="0" width="1" height="1" fill="#21336a"/><rect x="7" y="0" width="1" height="1" fill="#0000ff"/><rect x="8" y="0" width="1" height="1" fill="#21336a"/><rect x="9" y="0" width="1" height="1" fill="#0000ff"/><rect x="10" y="0" width="1" height="1" fill="#21336a"/><rect x="11" y="0" width="1" height="1" fill="#0000ff"/><rect x="12" y="0" width="1" height="1" fill="#21336a"/><rect x="13" y="0" width="1" height="1" fill="#0000ff"/><rect x="1" y="1" width="1" height="1" fill="#21336a"/><rect x="2" y="1" width="11" height="1" fill="#ffffff"/><rect x="13" y="1" width="1" height="1" fill="#21336a"/><rect x="1" y="2" width="1" height="1" fill="#0000ff"/><rect x="2" y="2" width="5" height="1" fill="#ffffff"/><rect x="7" y="2" width="4" height="1" fill="#a0a0a0"/><rect x="11" y="2" width="2" height="1" fill="#ffffff"/><rect x="13" y="2" width="1" height="1" fill="#0000ff"/><rect x="1" y="3" width="1" height="1" fill="#21336a"/><rect x="2" y="3" width="1" height="1" fill="#ffffff"/><rect x="3" y="3" width="8" height="1" fill="#b000d0"/><rect x="11" y="3" width="2" height="1" fill="#ffffff"/><rect x="13" y="3" width="1" height="1" fill="#21336a"/><rect x="1" y="4" width="1" height="1" fill="#0000ff"/><rect x="2" y="4" width="1" height="1" fill="#ffffff"/><rect x="3" y="4" width="3" height="1" fill="#a0a0a0"/><rect x="6" y="4" width="7" height="1" fill="#ffffff"/><rect x="13" y="4" width="1" height="1" fill="#0000ff"/><rect x="1" y="5" width="1" height="1" fill="#21336a"/><rect x="2" y="5" width="1" height="1" fill="#ffffff"/><rect x="3" y="5" width="8" height="1" fill="#b000d0"/><rect x="11" y="5" width="2" height="1" fill="#ffffff"/><rect x="13" y="5" width="1" height="1" fill="#21336a"/><rect x="1" y="6" width="1" height="1" fill="#0000ff"/><rect x="2" y="6" width="11" height="1" fill="#ffffff"/><rect x="13" y="6" width="1" height="1" fill="#0000ff"/><rect x="1" y="7" width="1" height="1" fill="#21336a"/><rect x="2" y="7" width="4" height="1" fill="#ffffff"/><rect x="6" y="7" width="5" height="1" fill="#404040"/><rect x="11" y="7" width="2" height="1" fill="#ffffff"/><rect x="13" y="7" width="1" height="1" fill="#21336a"/><rect x="1" y="8" width="1" height="1" fill="#0000ff"/><rect x="2" y="8" width="6" height="1" fill="#ffffff"/><rect x="8" y="8" width="2" height="1" fill="#21336a"/><rect x="10" y="8" width="3" height="1" fill="#ffffff"/><rect x="13" y="8" width="1" height="1" fill="#0000ff"/><rect x="1" y="9" width="1" height="1" fill="#21336a"/><rect x="2" y="9" width="1" height="1" fill="#ffffff"/><rect x="3" y="9" width="3" height="1" fill="#a0a0a0"/><rect x="6" y="9" width="1" height="1" fill="#ffffff"/><rect x="7" y="9" width="1" height="1" fill="#b000d0"/><rect x="8" y="9" width="2" height="1" fill="#ffffff"/><rect x="10" y="9" width="1" height="1" fill="#21336a"/><rect x="11" y="9" width="2" height="1" fill="#ffffff"/><rect x="13" y="9" width="1" height="1" fill="#21336a"/><rect x="1" y="10" width="1" height="1" fill="#0000ff"/><rect x="2" y="10" width="1" height="1" fill="#ffffff"/><rect x="3" y="10" width="1" height="1" fill="#b000d0"/><rect x="4" y="10" width="2" height="1" fill="#ffffff"/><rect x="6" y="10" width="1" height="1" fill="#b000d0"/><rect x="7" y="10" width="4" height="1" fill="#ffffff"/><rect x="11" y="10" width="1" height="1" fill="#b000d0"/><rect x="12" y="10" width="1" height="1" fill="#ffffff"/><rect x="13" y="10" width="1" height="1" fill="#0000ff"/><rect x="0" y="11" width="2" height="1" fill="#0000ff"/><rect x="2" y="11" width="2" height="1" fill="#ffffff"/><rect x="4" y="11" width="1" height="1" fill="#b000d0"/><rect x="5" y="11" width="5" height="1" fill="#ffffff"/><rect x="10" y="11" width="1" height="1" fill="#0000ff"/><rect x="11" y="11" width="1" height="1" fill="#ffffff"/><rect x="12" y="11" width="1" height="1" fill="#b000d0"/><rect x="13" y="11" width="2" height="1" fill="#0000ff"/><rect x="1" y="12" width="1" height="1" fill="#21336a"/><rect x="2" y="12" width="3" height="1" fill="#ffffff"/><rect x="5" y="12" width="1" height="1" fill="#b000d0"/><rect x="6" y="12" width="3" height="1" fill="#ffffff"/><rect x="9" y="12" width="1" height="1" fill="#b000d0"/><rect x="10" y="12" width="1" height="1" fill="#0000ff"/><rect x="11" y="12" width="2" height="1" fill="#ffffff"/><rect x="13" y="12" width="1" height="1" fill="#21336a"/><rect x="1" y="13" width="1" height="1" fill="#0000ff"/><rect x="2" y="13" width="4" height="1" fill="#ffffff"/><rect x="6" y="13" width="3" height="1" fill="#b000d0"/><rect x="9" y="13" width="1" height="1" fill="#0000ff"/><rect x="10" y="13" width="3" height="1" fill="#ffffff"/><rect x="13" y="13" width="1" height="1" fill="#0000ff"/><rect x="1" y="14" width="1" height="1" fill="#21336a"/><rect x="2" y="14" width="11" height="1" fill="#ffffff"/><rect x="13" y="14" width="1" height="1" fill="#21336a"/><rect x="1" y="15" width="1" height="1" fill="#0000ff"/><rect x="2" y="15" width="1" height="1" fill="#21336a"/><rect x="3" y="15" width="1" height="1" fill="#0000ff"/><rect x="4" y="15" width="1" height="1" fill="#21336a"/><rect x="5" y="15" width="1" height="1" fill="#0000ff"/><rect x="6" y="15" width="1" height="1" fill="#21336a"/><rect x="7" y="15" width="1" height="1" fill="#0000ff"/><rect x="8" y="15" width="1" height="1" fill="#21336a"/><rect x="9" y="15" width="1" height="1" fill="#0000ff"/><rect x="10" y="15" width="1" height="1" fill="#21336a"/><rect x="11" y="15" width="1" height="1" fill="#0000ff"/><rect x="12" y="15" width="1" height="1" fill="#21336a"/><rect x="13" y="15" width="1" height="1" fill="#0000ff"/></svg>
<span class="ui" style="left:207px;top:317px;">Threads</span>
<svg style="left:259px;top:305px" width="16" height="15" viewBox="0 0 16 15" shape-rendering="crispEdges"><rect x="0" y="0" width="1" height="1" fill="#d8d4c8"/><rect x="1" y="0" width="1" height="1" fill="#78a8f0"/><rect x="2" y="0" width="1" height="1" fill="#d8d4c8"/><rect x="3" y="0" width="1" height="1" fill="#78a8f0"/><rect x="4" y="0" width="1" height="1" fill="#d8d4c8"/><rect x="5" y="0" width="1" height="1" fill="#78a8f0"/><rect x="6" y="0" width="1" height="1" fill="#d8d4c8"/><rect x="7" y="0" width="1" height="1" fill="#78a8f0"/><rect x="8" y="0" width="1" height="1" fill="#d8d4c8"/><rect x="9" y="0" width="1" height="1" fill="#78a8f0"/><rect x="10" y="0" width="1" height="1" fill="#d8d4c8"/><rect x="11" y="0" width="1" height="1" fill="#78a8f0"/><rect x="12" y="0" width="1" height="1" fill="#d8d4c8"/><rect x="13" y="0" width="1" height="1" fill="#78a8f0"/><rect x="14" y="0" width="1" height="1" fill="#d8d4c8"/><rect x="15" y="0" width="1" height="1" fill="#78a8f0"/><rect x="0" y="1" width="16" height="1" fill="#d8d4c8"/><rect x="0" y="2" width="16" height="1" fill="#d8d4c8"/><rect x="0" y="3" width="1" height="1" fill="#78a8f0"/><rect x="1" y="3" width="15" height="1" fill="#d8d4c8"/><rect x="0" y="4" width="15" height="1" fill="#d8d4c8"/><rect x="15" y="4" width="1" height="1" fill="#78a8f0"/><rect x="0" y="5" width="1" height="1" fill="#78a8f0"/><rect x="1" y="5" width="15" height="1" fill="#d8d4c8"/><rect x="0" y="6" width="16" height="1" fill="#d8d4c8"/><rect x="0" y="7" width="1" height="1" fill="#78a8f0"/><rect x="1" y="7" width="15" height="1" fill="#d8d4c8"/><rect x="0" y="8" width="15" height="1" fill="#d8d4c8"/><rect x="15" y="8" width="1" height="1" fill="#78a8f0"/><rect x="0" y="9" width="1" height="1" fill="#78a8f0"/><rect x="1" y="9" width="15" height="1" fill="#d8d4c8"/><rect x="0" y="10" width="16" height="1" fill="#d8d4c8"/><rect x="0" y="11" width="1" height="1" fill="#78a8f0"/><rect x="1" y="11" width="15" height="1" fill="#d8d4c8"/><rect x="0" y="12" width="15" height="1" fill="#d8d4c8"/><rect x="15" y="12" width="1" height="1" fill="#78a8f0"/><rect x="0" y="13" width="1" height="1" fill="#78a8f0"/><rect x="1" y="13" width="15" height="1" fill="#d8d4c8"/><rect x="0" y="14" width="1" height="1" fill="#78a8f0"/><rect x="1" y="14" width="1" height="1" fill="#d8d4c8"/><rect x="2" y="14" width="1" height="1" fill="#78a8f0"/><rect x="3" y="14" width="2" height="1" fill="#d8d4c8"/><rect x="5" y="14" width="1" height="1" fill="#78a8f0"/><rect x="6" y="14" width="2" height="1" fill="#d8d4c8"/><rect x="8" y="14" width="1" height="1" fill="#78a8f0"/><rect x="9" y="14" width="2" height="1" fill="#d8d4c8"/><rect x="11" y="14" width="1" height="1" fill="#78a8f0"/><rect x="12" y="14" width="2" height="1" fill="#d8d4c8"/><rect x="14" y="14" width="1" height="1" fill="#78a8f0"/><rect x="15" y="14" width="1" height="1" fill="#d8d4c8"/></svg>
<svg style="left:260px;top:306px" width="14" height="12" viewBox="0 0 14 12" shape-rendering="crispEdges"><rect x="0" y="0" width="14" height="1" fill="#000000"/><rect x="0" y="1" width="14" height="1" fill="#000000"/><rect x="0" y="2" width="1" height="1" fill="#0000ff"/><rect x="1" y="2" width="1" height="1" fill="#00ffff"/><rect x="2" y="2" width="1" height="1" fill="#ffffff"/><rect x="3" y="2" width="1" height="1" fill="#00ffff"/><rect x="4" y="2" width="1" height="1" fill="#ffffff"/><rect x="5" y="2" width="1" height="1" fill="#00ffff"/><rect x="6" y="2" width="1" height="1" fill="#ffffff"/><rect x="7" y="2" width="1" height="1" fill="#00ffff"/><rect x="8" y="2" width="1" height="1" fill="#ffffff"/><rect x="9" y="2" width="1" height="1" fill="#00ffff"/><rect x="10" y="2" width="1" height="1" fill="#ffffff"/><rect x="11" y="2" width="1" height="1" fill="#00ffff"/><rect x="12" y="2" width="1" height="1" fill="#ffffff"/><rect x="13" y="2" width="1" height="1" fill="#0000ff"/><rect x="0" y="3" width="1" height="1" fill="#0000ff"/><rect x="1" y="3" width="1" height="1" fill="#ffffff"/><rect x="2" y="3" width="4" height="1" fill="#0000ff"/><rect x="6" y="3" width="2" height="1" fill="#000000"/><rect x="8" y="3" width="4" height="1" fill="#0000ff"/><rect x="12" y="3" width="1" height="1" fill="#00ffff"/><rect x="13" y="3" width="1" height="1" fill="#0000ff"/><rect x="0" y="4" width="1" height="1" fill="#0000ff"/><rect x="1" y="4" width="1" height="1" fill="#00ffff"/><rect x="2" y="4" width="1" height="1" fill="#0000ff"/><rect x="3" y="4" width="3" height="1" fill="#00ffff"/><rect x="6" y="4" width="1" height="1" fill="#0000ff"/><rect x="7" y="4" width="1" height="1" fill="#000000"/><rect x="8" y="4" width="1" height="1" fill="#ffffff"/><rect x="9" y="4" width="1" height="1" fill="#00ffff"/><rect x="10" y="4" width="1" height="1" fill="#000000"/><rect x="11" y="4" width="1" height="1" fill="#0000ff"/><rect x="12" y="4" width="1" height="1" fill="#ffffff"/><rect x="13" y="4" width="1" height="1" fill="#0000ff"/><rect x="0" y="5" width="1" height="1" fill="#0000ff"/><rect x="1" y="5" width="1" height="1" fill="#ffffff"/><rect x="2" y="5" width="1" height="1" fill="#0000ff"/><rect x="3" y="5" width="1" height="1" fill="#00ffff"/><rect x="4" y="5" width="1" height="1" fill="#000000"/><rect x="5" y="5" width="1" height="1" fill="#00ffff"/><rect x="6" y="5" width="6" height="1" fill="#0000ff"/><rect x="12" y="5" width="1" height="1" fill="#00ffff"/><rect x="13" y="5" width="1" height="1" fill="#0000ff"/><rect x="0" y="6" width="1" height="1" fill="#0000ff"/><rect x="1" y="6" width="1" height="1" fill="#00ffff"/><rect x="2" y="6" width="1" height="1" fill="#0000ff"/><rect x="3" y="6" width="8" height="1" fill="#00ffff"/><rect x="11" y="6" width="1" height="1" fill="#0000ff"/><rect x="12" y="6" width="1" height="1" fill="#ffffff"/><rect x="13" y="6" width="1" height="1" fill="#0000ff"/><rect x="0" y="7" width="1" height="1" fill="#0000ff"/><rect x="1" y="7" width="1" height="1" fill="#ffffff"/><rect x="2" y="7" width="1" height="1" fill="#0000ff"/><rect x="3" y="7" width="1" height="1" fill="#00ffff"/><rect x="4" y="7" width="1" height="1" fill="#000000"/><rect x="5" y="7" width="5" height="1" fill="#ffffff"/><rect x="10" y="7" width="1" height="1" fill="#00ffff"/><rect x="11" y="7" width="1" height="1" fill="#0000ff"/><rect x="12" y="7" width="1" height="1" fill="#00ffff"/><rect x="13" y="7" width="1" height="1" fill="#0000ff"/><rect x="0" y="8" width="1" height="1" fill="#0000ff"/><rect x="1" y="8" width="1" height="1" fill="#00ffff"/><rect x="2" y="8" width="1" height="1" fill="#0000ff"/><rect x="3" y="8" width="8" height="1" fill="#00ffff"/><rect x="11" y="8" width="1" height="1" fill="#0000ff"/><rect x="12" y="8" width="1" height="1" fill="#ffffff"/><rect x="13" y="8" width="1" height="1" fill="#0000ff"/><rect x="0" y="9" width="1" height="1" fill="#0000ff"/><rect x="1" y="9" width="1" height="1" fill="#ffffff"/><rect x="2" y="9" width="10" height="1" fill="#0000ff"/><rect x="12" y="9" width="1" height="1" fill="#00ffff"/><rect x="13" y="9" width="1" height="1" fill="#0000ff"/><rect x="0" y="10" width="1" height="1" fill="#0000ff"/><rect x="1" y="10" width="1" height="1" fill="#00ffff"/><rect x="2" y="10" width="1" height="1" fill="#ffffff"/><rect x="3" y="10" width="1" height="1" fill="#00ffff"/><rect x="4" y="10" width="1" height="1" fill="#ffffff"/><rect x="5" y="10" width="1" height="1" fill="#00ffff"/><rect x="6" y="10" width="1" height="1" fill="#ffffff"/><rect x="7" y="10" width="1" height="1" fill="#00ffff"/><rect x="8" y="10" width="1" height="1" fill="#ffffff"/><rect x="9" y="10" width="1" height="1" fill="#00ffff"/><rect x="10" y="10" width="1" height="1" fill="#ffffff"/><rect x="11" y="10" width="1" height="1" fill="#00ffff"/><rect x="12" y="10" width="1" height="1" fill="#ffffff"/><rect x="13" y="10" width="1" height="1" fill="#0000ff"/><rect x="0" y="11" width="14" height="1" fill="#0000ff"/></svg>
<span class="ui" style="left:284px;top:317px;">Environment</span>
<svg style="left:358px;top:304px" width="16" height="16" viewBox="0 0 16 16" shape-rendering="crispEdges"><rect x="1" y="1" width="3" height="1" fill="#b000d0"/><rect x="7" y="1" width="2" height="1" fill="#b000d0"/><rect x="1" y="3" width="9" height="1" fill="#0000ff"/><rect x="2" y="4" width="3" height="1" fill="#0000ff"/><rect x="9" y="4" width="1" height="1" fill="#0000ff"/><rect x="4" y="5" width="2" height="1" fill="#0000ff"/><rect x="5" y="6" width="2" height="1" fill="#0000ff"/><rect x="5" y="7" width="2" height="1" fill="#0000ff"/><rect x="12" y="7" width="3" height="1" fill="#a0a0a0"/><rect x="4" y="8" width="2" height="1" fill="#0000ff"/><rect x="12" y="8" width="1" height="1" fill="#a0a0a0"/><rect x="3" y="9" width="2" height="1" fill="#0000ff"/><rect x="12" y="9" width="1" height="1" fill="#a0a0a0"/><rect x="1" y="10" width="3" height="1" fill="#0000ff"/><rect x="9" y="10" width="1" height="1" fill="#0000ff"/><rect x="12" y="10" width="1" height="1" fill="#a0a0a0"/><rect x="14" y="10" width="1" height="1" fill="#c0c0c0"/><rect x="1" y="11" width="9" height="1" fill="#0000ff"/><rect x="12" y="11" width="1" height="1" fill="#a0a0a0"/><rect x="14" y="11" width="1" height="1" fill="#c0c0c0"/><rect x="1" y="13" width="2" height="1" fill="#b000d0"/><rect x="9" y="13" width="1" height="1" fill="#b000d0"/><rect x="1" y="14" width="1" height="1" fill="#b000d0"/><rect x="5" y="14" width="3" height="1" fill="#b000d0"/><rect x="9" y="14" width="1" height="1" fill="#b000d0"/><rect x="1" y="15" width="1" height="1" fill="#b000d0"/><rect x="4" y="15" width="3" height="1" fill="#b000d0"/><rect x="9" y="15" width="1" height="1" fill="#b000d0"/></svg>
<span class="ui" style="left:382px;top:317px;">Summary</span>
<svg style="left:438px;top:304px" width="17" height="16" viewBox="0 0 17 16" shape-rendering="crispEdges"><rect x="1" y="0" width="9" height="1" fill="#b000d0"/><rect x="11" y="0" width="6" height="1" fill="#dce8fa"/><rect x="1" y="1" width="1" height="1" fill="#b000d0"/><rect x="2" y="1" width="6" height="1" fill="#ffffff"/><rect x="8" y="1" width="2" height="1" fill="#b000d0"/><rect x="10" y="1" width="1" height="1" fill="#000000"/><rect x="11" y="1" width="6" height="1" fill="#dce8fa"/><rect x="1" y="2" width="1" height="1" fill="#b000d0"/><rect x="2" y="2" width="1" height="1" fill="#ffffff"/><rect x="3" y="2" width="4" height="1" fill="#a0a0a0"/><rect x="7" y="2" width="1" height="1" fill="#ffffff"/><rect x="8" y="2" width="2" height="1" fill="#b000d0"/><rect x="10" y="2" width="1" height="1" fill="#000000"/><rect x="11" y="2" width="2" height="1" fill="#dce8fa"/><rect x="13" y="2" width="1" height="1" fill="#ffffff"/><rect x="14" y="2" width="3" height="1" fill="#dce8fa"/><rect x="1" y="3" width="1" height="1" fill="#b000d0"/><rect x="2" y="3" width="6" height="1" fill="#ffffff"/><rect x="8" y="3" width="1" height="1" fill="#b000d0"/><rect x="9" y="3" width="2" height="1" fill="#000000"/><rect x="11" y="3" width="3" height="1" fill="#dce8fa"/><rect x="14" y="3" width="1" height="1" fill="#ffffff"/><rect x="15" y="3" width="2" height="1" fill="#dce8fa"/><rect x="1" y="4" width="9" height="1" fill="#b000d0"/><rect x="10" y="4" width="1" height="1" fill="#000000"/><rect x="11" y="4" width="6" height="1" fill="#dce8fa"/><rect x="1" y="5" width="1" height="1" fill="#b000d0"/><rect x="2" y="5" width="6" height="1" fill="#ffffff"/><rect x="8" y="5" width="6" height="1" fill="#b000d0"/><rect x="14" y="5" width="3" height="1" fill="#dce8fa"/><rect x="1" y="6" width="1" height="1" fill="#b000d0"/><rect x="2" y="6" width="2" height="1" fill="#ffffff"/><rect x="4" y="6" width="1" height="1" fill="#78a8f0"/><rect x="5" y="6" width="2" height="1" fill="#ffffff"/><rect x="7" y="6" width="2" height="1" fill="#b000d0"/><rect x="9" y="6" width="5" height="1" fill="#a0a0a0"/><rect x="14" y="6" width="2" height="1" fill="#000000"/><rect x="16" y="6" width="1" height="1" fill="#dce8fa"/><rect x="1" y="7" width="7" height="1" fill="#b000d0"/><rect x="8" y="7" width="2" height="1" fill="#a0a0a0"/><rect x="10" y="7" width="1" height="1" fill="#b000d0"/><rect x="11" y="7" width="1" height="1" fill="#a0a0a0"/><rect x="12" y="7" width="1" height="1" fill="#b000d0"/><rect x="13" y="7" width="3" height="1" fill="#a0a0a0"/><rect x="16" y="7" width="1" height="1" fill="#000000"/><rect x="1" y="8" width="1" height="1" fill="#b000d0"/><rect x="2" y="8" width="4" height="1" fill="#ffffff"/><rect x="6" y="8" width="1" height="1" fill="#b000d0"/><rect x="7" y="8" width="2" height="1" fill="#a0a0a0"/><rect x="9" y="8" width="1" height="1" fill="#ffffff"/><rect x="10" y="8" width="3" height="1" fill="#a0a0a0"/><rect x="13" y="8" width="1" height="1" fill="#ffffff"/><rect x="14" y="8" width="2" height="1" fill="#a0a0a0"/><rect x="16" y="8" width="1" height="1" fill="#000000"/><rect x="1" y="9" width="1" height="1" fill="#b000d0"/><rect x="2" y="9" width="1" height="1" fill="#ffffff"/><rect x="3" y="9" width="2" height="1" fill="#a0a0a0"/><rect x="5" y="9" width="1" height="1" fill="#ffffff"/><rect x="6" y="9" width="1" height="1" fill="#b000d0"/><rect x="7" y="9" width="1" height="1" fill="#a0a0a0"/><rect x="8" y="9" width="1" height="1" fill="#b000d0"/><rect x="9" y="9" width="1" height="1" fill="#a0a0a0"/><rect x="10" y="9" width="1" height="1" fill="#ffffff"/><rect x="11" y="9" width="1" height="1" fill="#a0a0a0"/><rect x="12" y="9" width="1" height="1" fill="#ffffff"/><rect x="13" y="9" width="2" height="1" fill="#a0a0a0"/><rect x="15" y="9" width="1" height="1" fill="#b000d0"/><rect x="16" y="9" width="1" height="1" fill="#000000"/><rect x="1" y="10" width="1" height="1" fill="#b000d0"/><rect x="2" y="10" width="1" height="1" fill="#ffffff"/><rect x="3" y="10" width="2" height="1" fill="#a0a0a0"/><rect x="5" y="10" width="1" height="1" fill="#ffffff"/><rect x="6" y="10" width="1" height="1" fill="#b000d0"/><rect x="7" y="10" width="4" height="1" fill="#a0a0a0"/><rect x="11" y="10" width="2" height="1" fill="#ffffff"/><rect x="13" y="10" width="3" height="1" fill="#a0a0a0"/><rect x="16" y="10" width="1" height="1" fill="#000000"/><rect x="1" y="11" width="1" height="1" fill="#b000d0"/><rect x="2" y="11" width="1" height="1" fill="#ffffff"/><rect x="3" y="11" width="2" height="1" fill="#a0a0a0"/><rect x="5" y="11" width="1" height="1" fill="#ffffff"/><rect x="6" y="11" width="1" height="1" fill="#b000d0"/><rect x="7" y="11" width="4" height="1" fill="#a0a0a0"/><rect x="11" y="11" width="2" height="1" fill="#ffffff"/><rect x="13" y="11" width="3" height="1" fill="#a0a0a0"/><rect x="16" y="11" width="1" height="1" fill="#000000"/><rect x="1" y="12" width="1" height="1" fill="#b000d0"/><rect x="2" y="12" width="1" height="1" fill="#ffffff"/><rect x="3" y="12" width="2" height="1" fill="#a0a0a0"/><rect x="5" y="12" width="2" height="1" fill="#b000d0"/><rect x="7" y="12" width="1" height="1" fill="#000000"/><rect x="8" y="12" width="2" height="1" fill="#a0a0a0"/><rect x="10" y="12" width="1" height="1" fill="#ffffff"/><rect x="11" y="12" width="1" height="1" fill="#a0a0a0"/><rect x="12" y="12" width="1" height="1" fill="#ffffff"/><rect x="13" y="12" width="2" height="1" fill="#a0a0a0"/><rect x="15" y="12" width="1" height="1" fill="#000000"/><rect x="1" y="13" width="1" height="1" fill="#b000d0"/><rect x="2" y="13" width="5" height="1" fill="#ffffff"/><rect x="7" y="13" width="1" height="1" fill="#000000"/><rect x="8" y="13" width="1" height="1" fill="#a0a0a0"/><rect x="9" y="13" width="1" height="1" fill="#ffffff"/><rect x="10" y="13" width="1" height="1" fill="#b000d0"/><rect x="11" y="13" width="2" height="1" fill="#a0a0a0"/><rect x="13" y="13" width="1" height="1" fill="#ffffff"/><rect x="14" y="13" width="2" height="1" fill="#000000"/><rect x="2" y="14" width="7" height="1" fill="#000000"/><rect x="9" y="14" width="5" height="1" fill="#a0a0a0"/><rect x="14" y="14" width="2" height="1" fill="#000000"/><rect x="9" y="15" width="5" height="1" fill="#000000"/></svg>
<span class="ui" style="left:464px;top:317px;">Repository</span>
<svg style="left:529px;top:304px" width="16" height="16" viewBox="0 0 16 16" shape-rendering="crispEdges"><rect x="3" y="1" width="1" height="1" fill="#21336a"/><rect x="4" y="1" width="1" height="1" fill="#0000ff"/><rect x="5" y="1" width="1" height="1" fill="#21336a"/><rect x="6" y="1" width="1" height="1" fill="#0000ff"/><rect x="7" y="1" width="1" height="1" fill="#21336a"/><rect x="8" y="1" width="1" height="1" fill="#0000ff"/><rect x="9" y="1" width="1" height="1" fill="#21336a"/><rect x="10" y="1" width="1" height="1" fill="#0000ff"/><rect x="11" y="1" width="1" height="1" fill="#21336a"/><rect x="12" y="1" width="1" height="1" fill="#0000ff"/><rect x="13" y="1" width="1" height="1" fill="#21336a"/><rect x="14" y="1" width="1" height="1" fill="#0000ff"/><rect x="15" y="1" width="1" height="1" fill="#21336a"/><rect x="3" y="2" width="1" height="1" fill="#0000ff"/><rect x="4" y="2" width="11" height="1" fill="#ffffff"/><rect x="15" y="2" width="1" height="1" fill="#b000d0"/><rect x="3" y="3" width="1" height="1" fill="#b000d0"/><rect x="4" y="3" width="11" height="1" fill="#ffffff"/><rect x="15" y="3" width="1" height="1" fill="#0000ff"/><rect x="3" y="4" width="1" height="1" fill="#0000ff"/><rect x="4" y="4" width="1" height="1" fill="#ffffff"/><rect x="5" y="4" width="1" height="1" fill="#21336a"/><rect x="6" y="4" width="1" height="1" fill="#a0a0a0"/><rect x="7" y="4" width="1" height="1" fill="#21336a"/><rect x="8" y="4" width="1" height="1" fill="#a0a0a0"/><rect x="9" y="4" width="1" height="1" fill="#21336a"/><rect x="10" y="4" width="1" height="1" fill="#a0a0a0"/><rect x="11" y="4" width="4" height="1" fill="#ffffff"/><rect x="15" y="4" width="1" height="1" fill="#b000d0"/><rect x="3" y="5" width="1" height="1" fill="#b000d0"/><rect x="4" y="5" width="1" height="1" fill="#ffffff"/><rect x="5" y="5" width="2" height="1" fill="#21336a"/><rect x="7" y="5" width="6" height="1" fill="#ffffff"/><rect x="13" y="5" width="1" height="1" fill="#21336a"/><rect x="14" y="5" width="1" height="1" fill="#ffffff"/><rect x="15" y="5" width="1" height="1" fill="#0000ff"/><rect x="1" y="6" width="1" height="1" fill="#21336a"/><rect x="3" y="6" width="1" height="1" fill="#0000ff"/><rect x="4" y="6" width="2" height="1" fill="#ffffff"/><rect x="6" y="6" width="1" height="1" fill="#21336a"/><rect x="7" y="6" width="3" height="1" fill="#a0a0a0"/><rect x="10" y="6" width="3" height="1" fill="#ffffff"/><rect x="13" y="6" width="2" height="1" fill="#21336a"/><rect x="15" y="6" width="1" height="1" fill="#b000d0"/><rect x="1" y="7" width="2" height="1" fill="#21336a"/><rect x="3" y="7" width="1" height="1" fill="#b000d0"/><rect x="4" y="7" width="4" height="1" fill="#ffffff"/><rect x="8" y="7" width="1" height="1" fill="#b000d0"/><rect x="9" y="7" width="1" height="1" fill="#21336a"/><rect x="10" y="7" width="2" height="1" fill="#ffffff"/><rect x="12" y="7" width="3" height="1" fill="#21336a"/><rect x="15" y="7" width="1" height="1" fill="#0000ff"/><rect x="0" y="8" width="1" height="1" fill="#21336a"/><rect x="1" y="8" width="1" height="1" fill="#ffffff"/><rect x="2" y="8" width="1" height="1" fill="#21336a"/><rect x="3" y="8" width="1" height="1" fill="#0000ff"/><rect x="4" y="8" width="1" height="1" fill="#ffffff"/><rect x="5" y="8" width="6" height="1" fill="#21336a"/><rect x="11" y="8" width="4" height="1" fill="#ffffff"/><rect x="15" y="8" width="1" height="1" fill="#b000d0"/><rect x="0" y="9" width="1" height="1" fill="#21336a"/><rect x="1" y="9" width="1" height="1" fill="#00c8e8"/><rect x="2" y="9" width="2" height="1" fill="#21336a"/><rect x="4" y="9" width="1" height="1" fill="#ffffff"/><rect x="5" y="9" width="1" height="1" fill="#21336a"/><rect x="6" y="9" width="1" height="1" fill="#ffffff"/><rect x="7" y="9" width="1" height="1" fill="#21336a"/><rect x="8" y="9" width="1" height="1" fill="#00c8e8"/><rect x="9" y="9" width="2" height="1" fill="#21336a"/><rect x="11" y="9" width="4" height="1" fill="#ffffff"/><rect x="15" y="9" width="1" height="1" fill="#0000ff"/><rect x="0" y="10" width="1" height="1" fill="#21336a"/><rect x="1" y="10" width="2" height="1" fill="#a0a0a0"/><rect x="3" y="10" width="2" height="1" fill="#21336a"/><rect x="5" y="10" width="1" height="1" fill="#ffffff"/><rect x="6" y="10" width="5" height="1" fill="#21336a"/><rect x="11" y="10" width="3" height="1" fill="#a0a0a0"/><rect x="14" y="10" width="1" height="1" fill="#ffffff"/><rect x="15" y="10" width="1" height="1" fill="#b000d0"/><rect x="0" y="11" width="1" height="1" fill="#21336a"/><rect x="1" y="11" width="2" height="1" fill="#a0a0a0"/><rect x="3" y="11" width="1" height="1" fill="#21336a"/><rect x="4" y="11" width="2" height="1" fill="#ffffff"/><rect x="6" y="11" width="2" height="1" fill="#21336a"/><rect x="8" y="11" width="1" height="1" fill="#a0a0a0"/><rect x="9" y="11" width="2" height="1" fill="#21336a"/><rect x="11" y="11" width="4" height="1" fill="#ffffff"/><rect x="15" y="11" width="1" height="1" fill="#0000ff"/><rect x="1" y="12" width="2" height="1" fill="#21336a"/><rect x="3" y="12" width="1" height="1" fill="#b000d0"/><rect x="4" y="12" width="1" height="1" fill="#ffffff"/><rect x="5" y="12" width="2" height="1" fill="#a0a0a0"/><rect x="7" y="12" width="3" height="1" fill="#21336a"/><rect x="10" y="12" width="1" height="1" fill="#ffffff"/><rect x="11" y="12" width="3" height="1" fill="#a0a0a0"/><rect x="14" y="12" width="1" height="1" fill="#ffffff"/><rect x="15" y="12" width="1" height="1" fill="#b000d0"/><rect x="3" y="13" width="1" height="1" fill="#0000ff"/><rect x="4" y="13" width="11" height="1" fill="#ffffff"/><rect x="15" y="13" width="1" height="1" fill="#0000ff"/><rect x="3" y="14" width="1" height="1" fill="#b000d0"/><rect x="4" y="14" width="1" height="1" fill="#0000ff"/><rect x="5" y="14" width="1" height="1" fill="#b000d0"/><rect x="6" y="14" width="1" height="1" fill="#0000ff"/><rect x="7" y="14" width="1" height="1" fill="#b000d0"/><rect x="8" y="14" width="1" height="1" fill="#0000ff"/><rect x="9" y="14" width="1" height="1" fill="#b000d0"/><rect x="10" y="14" width="1" height="1" fill="#0000ff"/><rect x="11" y="14" width="1" height="1" fill="#b000d0"/><rect x="12" y="14" width="1" height="1" fill="#0000ff"/><rect x="13" y="14" width="1" height="1" fill="#b000d0"/><rect x="14" y="14" width="1" height="1" fill="#0000ff"/><rect x="15" y="14" width="1" height="1" fill="#b000d0"/></svg>
<span class="ui" style="left:554px;top:317px;">MemoryDump</span>
<svg style="left:8px;top:50px" width="16" height="16" viewBox="0 0 16 16" shape-rendering="crispEdges"><rect x="9" y="1" width="3" height="1" fill="#0000ff"/><rect x="8" y="2" width="1" height="1" fill="#0000ff"/><rect x="12" y="2" width="1" height="1" fill="#0000ff"/><rect x="15" y="2" width="1" height="1" fill="#0000ff"/><rect x="13" y="3" width="1" height="1" fill="#0000ff"/><rect x="15" y="3" width="1" height="1" fill="#0000ff"/><rect x="1" y="4" width="3" height="1" fill="#0000ff"/><rect x="12" y="4" width="4" height="1" fill="#0000ff"/><rect x="0" y="5" width="11" height="1" fill="#0000ff"/><rect x="0" y="6" width="1" height="1" fill="#0000ff"/><rect x="1" y="6" width="1" height="1" fill="#ffff00"/><rect x="2" y="6" width="1" height="1" fill="#ffffff"/><rect x="3" y="6" width="1" height="1" fill="#ffff00"/><rect x="4" y="6" width="1" height="1" fill="#ffffff"/><rect x="5" y="6" width="1" height="1" fill="#ffff00"/><rect x="6" y="6" width="1" height="1" fill="#ffffff"/><rect x="7" y="6" width="1" height="1" fill="#ffff00"/><rect x="8" y="6" width="1" height="1" fill="#ffffff"/><rect x="9" y="6" width="1" height="1" fill="#ffff00"/><rect x="10" y="6" width="1" height="1" fill="#0000ff"/><rect x="0" y="7" width="1" height="1" fill="#0000ff"/><rect x="1" y="7" width="1" height="1" fill="#ffffff"/><rect x="2" y="7" width="1" height="1" fill="#ffff00"/><rect x="3" y="7" width="1" height="1" fill="#ffffff"/><rect x="4" y="7" width="1" height="1" fill="#ffff00"/><rect x="5" y="7" width="1" height="1" fill="#ffffff"/><rect x="6" y="7" width="1" height="1" fill="#ffff00"/><rect x="7" y="7" width="1" height="1" fill="#ffffff"/><rect x="8" y="7" width="1" height="1" fill="#ffff00"/><rect x="9" y="7" width="1" height="1" fill="#ffffff"/><rect x="10" y="7" width="1" height="1" fill="#0000ff"/><rect x="0" y="8" width="1" height="1" fill="#0000ff"/><rect x="1" y="8" width="1" height="1" fill="#ffff00"/><rect x="2" y="8" width="1" height="1" fill="#ffffff"/><rect x="3" y="8" width="1" height="1" fill="#ffff00"/><rect x="4" y="8" width="1" height="1" fill="#ffffff"/><rect x="5" y="8" width="11" height="1" fill="#0000ff"/><rect x="0" y="9" width="1" height="1" fill="#0000ff"/><rect x="1" y="9" width="1" height="1" fill="#ffffff"/><rect x="2" y="9" width="1" height="1" fill="#ffff00"/><rect x="3" y="9" width="1" height="1" fill="#ffffff"/><rect x="4" y="9" width="11" height="1" fill="#0000ff"/><rect x="0" y="10" width="1" height="1" fill="#0000ff"/><rect x="1" y="10" width="1" height="1" fill="#ffff00"/><rect x="2" y="10" width="1" height="1" fill="#ffffff"/><rect x="3" y="10" width="11" height="1" fill="#0000ff"/><rect x="0" y="11" width="1" height="1" fill="#0000ff"/><rect x="1" y="11" width="1" height="1" fill="#ffffff"/><rect x="2" y="11" width="11" height="1" fill="#0000ff"/><rect x="0" y="12" width="12" height="1" fill="#0000ff"/><rect x="0" y="13" width="11" height="1" fill="#0000ff"/></svg>
<svg style="left:31px;top:50px" width="16" height="16" viewBox="0 0 16 16" shape-rendering="crispEdges"><rect x="5" y="1" width="2" height="1" fill="#ffff00"/><rect x="8" y="1" width="7" height="1" fill="#21336a"/><rect x="4" y="2" width="1" height="1" fill="#ffff00"/><rect x="6" y="2" width="2" height="1" fill="#21336a"/><rect x="8" y="2" width="6" height="1" fill="#ffff00"/><rect x="14" y="2" width="1" height="1" fill="#21336a"/><rect x="15" y="2" width="1" height="1" fill="#808080"/><rect x="3" y="3" width="1" height="1" fill="#ffff00"/><rect x="5" y="3" width="1" height="1" fill="#21336a"/><rect x="6" y="3" width="2" height="1" fill="#f0ead8"/><rect x="8" y="3" width="7" height="1" fill="#21336a"/><rect x="15" y="3" width="1" height="1" fill="#808080"/><rect x="3" y="4" width="1" height="1" fill="#ffff00"/><rect x="4" y="4" width="2" height="1" fill="#21336a"/><rect x="6" y="4" width="2" height="1" fill="#f0ead8"/><rect x="8" y="4" width="7" height="1" fill="#21336a"/><rect x="15" y="4" width="1" height="1" fill="#808080"/><rect x="2" y="5" width="2" height="1" fill="#ffff00"/><rect x="4" y="5" width="2" height="1" fill="#21336a"/><rect x="6" y="5" width="2" height="1" fill="#f0ead8"/><rect x="8" y="5" width="7" height="1" fill="#21336a"/><rect x="15" y="5" width="1" height="1" fill="#808080"/><rect x="2" y="6" width="13" height="1" fill="#21336a"/><rect x="15" y="6" width="1" height="1" fill="#808080"/><rect x="3" y="7" width="4" height="1" fill="#21336a"/><rect x="9" y="7" width="7" height="1" fill="#808080"/><rect x="4" y="8" width="2" height="1" fill="#21336a"/><rect x="1" y="9" width="1" height="1" fill="#d000d8"/><rect x="2" y="9" width="1" height="1" fill="#404040"/><rect x="3" y="9" width="1" height="1" fill="#d000d8"/><rect x="4" y="9" width="1" height="1" fill="#21336a"/><rect x="5" y="9" width="1" height="1" fill="#d000d8"/><rect x="6" y="9" width="1" height="1" fill="#404040"/><rect x="7" y="9" width="1" height="1" fill="#d000d8"/><rect x="8" y="9" width="1" height="1" fill="#404040"/><rect x="9" y="9" width="1" height="1" fill="#d000d8"/><rect x="10" y="9" width="1" height="1" fill="#404040"/><rect x="11" y="9" width="1" height="1" fill="#d000d8"/><rect x="1" y="10" width="11" height="1" fill="#ffff00"/><rect x="12" y="10" width="1" height="1" fill="#808080"/><rect x="1" y="11" width="11" height="1" fill="#ffff00"/><rect x="12" y="11" width="1" height="1" fill="#808080"/><rect x="1" y="12" width="11" height="1" fill="#ffff00"/><rect x="12" y="12" width="1" height="1" fill="#808080"/><rect x="1" y="13" width="11" height="1" fill="#ffff00"/><rect x="12" y="13" width="1" height="1" fill="#808080"/><rect x="0" y="14" width="13" height="1" fill="#808080"/></svg>
<svg style="left:55px;top:52px" width="14" height="12" viewBox="0 0 14 12" shape-rendering="crispEdges"><rect x="0" y="0" width="14" height="1" fill="#000000"/><rect x="0" y="1" width="14" height="1" fill="#000000"/><rect x="0" y="2" width="1" height="1" fill="#21336a"/><rect x="1" y="2" width="1" height="1" fill="#00ffff"/><rect x="2" y="2" width="1" height="1" fill="#ffffff"/><rect x="3" y="2" width="1" height="1" fill="#00ffff"/><rect x="4" y="2" width="1" height="1" fill="#ffffff"/><rect x="5" y="2" width="1" height="1" fill="#00ffff"/><rect x="6" y="2" width="1" height="1" fill="#ffffff"/><rect x="7" y="2" width="1" height="1" fill="#00ffff"/><rect x="8" y="2" width="1" height="1" fill="#ffffff"/><rect x="9" y="2" width="1" height="1" fill="#00ffff"/><rect x="10" y="2" width="1" height="1" fill="#ffffff"/><rect x="11" y="2" width="1" height="1" fill="#00ffff"/><rect x="12" y="2" width="1" height="1" fill="#ffffff"/><rect x="13" y="2" width="1" height="1" fill="#21336a"/><rect x="0" y="3" width="1" height="1" fill="#21336a"/><rect x="1" y="3" width="1" height="1" fill="#ffffff"/><rect x="2" y="3" width="4" height="1" fill="#21336a"/><rect x="6" y="3" width="2" height="1" fill="#000000"/><rect x="8" y="3" width="4" height="1" fill="#21336a"/><rect x="12" y="3" width="1" height="1" fill="#00ffff"/><rect x="13" y="3" width="1" height="1" fill="#21336a"/><rect x="0" y="4" width="1" height="1" fill="#21336a"/><rect x="1" y="4" width="1" height="1" fill="#00ffff"/><rect x="2" y="4" width="1" height="1" fill="#21336a"/><rect x="3" y="4" width="3" height="1" fill="#00ffff"/><rect x="6" y="4" width="1" height="1" fill="#21336a"/><rect x="7" y="4" width="1" height="1" fill="#000000"/><rect x="8" y="4" width="1" height="1" fill="#ffffff"/><rect x="9" y="4" width="1" height="1" fill="#00ffff"/><rect x="10" y="4" width="1" height="1" fill="#000000"/><rect x="11" y="4" width="1" height="1" fill="#21336a"/><rect x="12" y="4" width="1" height="1" fill="#ffffff"/><rect x="13" y="4" width="1" height="1" fill="#21336a"/><rect x="0" y="5" width="1" height="1" fill="#21336a"/><rect x="1" y="5" width="1" height="1" fill="#ffffff"/><rect x="2" y="5" width="1" height="1" fill="#21336a"/><rect x="3" y="5" width="1" height="1" fill="#00ffff"/><rect x="4" y="5" width="1" height="1" fill="#000000"/><rect x="5" y="5" width="1" height="1" fill="#00ffff"/><rect x="6" y="5" width="6" height="1" fill="#21336a"/><rect x="12" y="5" width="1" height="1" fill="#00ffff"/><rect x="13" y="5" width="1" height="1" fill="#21336a"/><rect x="0" y="6" width="1" height="1" fill="#21336a"/><rect x="1" y="6" width="1" height="1" fill="#00ffff"/><rect x="2" y="6" width="1" height="1" fill="#21336a"/><rect x="3" y="6" width="8" height="1" fill="#00ffff"/><rect x="11" y="6" width="1" height="1" fill="#21336a"/><rect x="12" y="6" width="1" height="1" fill="#ffffff"/><rect x="13" y="6" width="1" height="1" fill="#21336a"/><rect x="0" y="7" width="1" height="1" fill="#21336a"/><rect x="1" y="7" width="1" height="1" fill="#ffffff"/><rect x="2" y="7" width="1" height="1" fill="#21336a"/><rect x="3" y="7" width="1" height="1" fill="#00ffff"/><rect x="4" y="7" width="1" height="1" fill="#000000"/><rect x="5" y="7" width="5" height="1" fill="#ffffff"/><rect x="10" y="7" width="1" height="1" fill="#00ffff"/><rect x="11" y="7" width="1" height="1" fill="#21336a"/><rect x="12" y="7" width="1" height="1" fill="#00ffff"/><rect x="13" y="7" width="1" height="1" fill="#21336a"/><rect x="0" y="8" width="1" height="1" fill="#21336a"/><rect x="1" y="8" width="1" height="1" fill="#00ffff"/><rect x="2" y="8" width="1" height="1" fill="#21336a"/><rect x="3" y="8" width="8" height="1" fill="#00ffff"/><rect x="11" y="8" width="1" height="1" fill="#21336a"/><rect x="12" y="8" width="1" height="1" fill="#ffffff"/><rect x="13" y="8" width="1" height="1" fill="#21336a"/><rect x="0" y="9" width="1" height="1" fill="#21336a"/><rect x="1" y="9" width="1" height="1" fill="#ffffff"/><rect x="2" y="9" width="10" height="1" fill="#21336a"/><rect x="12" y="9" width="1" height="1" fill="#00ffff"/><rect x="13" y="9" width="1" height="1" fill="#21336a"/><rect x="0" y="10" width="1" height="1" fill="#21336a"/><rect x="1" y="10" width="1" height="1" fill="#00ffff"/><rect x="2" y="10" width="1" height="1" fill="#ffffff"/><rect x="3" y="10" width="1" height="1" fill="#00ffff"/><rect x="4" y="10" width="1" height="1" fill="#ffffff"/><rect x="5" y="10" width="1" height="1" fill="#00ffff"/><rect x="6" y="10" width="1" height="1" fill="#ffffff"/><rect x="7" y="10" width="1" height="1" fill="#00ffff"/><rect x="8" y="10" width="1" height="1" fill="#ffffff"/><rect x="9" y="10" width="1" height="1" fill="#00ffff"/><rect x="10" y="10" width="1" height="1" fill="#ffffff"/><rect x="11" y="10" width="1" height="1" fill="#00ffff"/><rect x="12" y="10" width="1" height="1" fill="#ffffff"/><rect x="13" y="10" width="1" height="1" fill="#21336a"/><rect x="0" y="11" width="14" height="1" fill="#21336a"/></svg>
<svg style="left:77px;top:50px" width="16" height="15" viewBox="0 0 16 15" shape-rendering="crispEdges"><rect x="10" y="0" width="1" height="1" fill="#0000ff"/><rect x="1" y="1" width="5" height="1" fill="#ffff00"/><rect x="9" y="1" width="2" height="1" fill="#0000ff"/><rect x="1" y="2" width="1" height="1" fill="#ffff00"/><rect x="2" y="2" width="2" height="1" fill="#00c8e8"/><rect x="4" y="2" width="2" height="1" fill="#ffff00"/><rect x="6" y="2" width="1" height="1" fill="#000000"/><rect x="8" y="2" width="5" height="1" fill="#0000ff"/><rect x="1" y="3" width="4" height="1" fill="#0000ff"/><rect x="5" y="3" width="1" height="1" fill="#ffff00"/><rect x="6" y="3" width="1" height="1" fill="#000000"/><rect x="9" y="3" width="6" height="1" fill="#0000ff"/><rect x="1" y="4" width="1" height="1" fill="#ffff00"/><rect x="2" y="4" width="2" height="1" fill="#ffffff"/><rect x="4" y="4" width="2" height="1" fill="#ffff00"/><rect x="6" y="4" width="1" height="1" fill="#000000"/><rect x="10" y="4" width="2" height="1" fill="#0000ff"/><rect x="13" y="4" width="2" height="1" fill="#0000ff"/><rect x="1" y="5" width="4" height="1" fill="#0000ff"/><rect x="5" y="5" width="1" height="1" fill="#ffff00"/><rect x="6" y="5" width="1" height="1" fill="#000000"/><rect x="13" y="5" width="2" height="1" fill="#0000ff"/><rect x="1" y="6" width="1" height="1" fill="#ffff00"/><rect x="2" y="6" width="2" height="1" fill="#ffffff"/><rect x="4" y="6" width="11" height="1" fill="#ffff00"/><rect x="1" y="7" width="4" height="1" fill="#0000ff"/><rect x="5" y="7" width="1" height="1" fill="#ffff00"/><rect x="6" y="7" width="9" height="1" fill="#0000ff"/><rect x="1" y="8" width="3" height="1" fill="#ffff00"/><rect x="4" y="8" width="1" height="1" fill="#d000d8"/><rect x="5" y="8" width="1" height="1" fill="#ffff00"/><rect x="6" y="8" width="9" height="1" fill="#0000ff"/><rect x="1" y="9" width="5" height="1" fill="#ffff00"/><rect x="8" y="9" width="6" height="1" fill="#ffff00"/><rect x="1" y="10" width="5" height="1" fill="#000000"/><rect x="9" y="10" width="2" height="1" fill="#ffff00"/><rect x="11" y="10" width="2" height="1" fill="#0000ff"/><rect x="13" y="10" width="1" height="1" fill="#ffff00"/><rect x="14" y="10" width="1" height="1" fill="#0000ff"/><rect x="9" y="11" width="1" height="1" fill="#0000ff"/><rect x="10" y="11" width="1" height="1" fill="#ffffff"/><rect x="11" y="11" width="1" height="1" fill="#0000ff"/><rect x="12" y="11" width="1" height="1" fill="#ffff00"/><rect x="13" y="11" width="1" height="1" fill="#d000d8"/><rect x="14" y="11" width="1" height="1" fill="#ffff00"/><rect x="8" y="12" width="2" height="1" fill="#0000ff"/><rect x="10" y="12" width="1" height="1" fill="#ffffff"/><rect x="11" y="12" width="1" height="1" fill="#d000d8"/><rect x="12" y="12" width="1" height="1" fill="#0000ff"/><rect x="13" y="12" width="1" height="1" fill="#ffff00"/><rect x="7" y="13" width="2" height="1" fill="#a0a0a0"/><rect x="10" y="13" width="1" height="1" fill="#0000ff"/><rect x="11" y="13" width="1" height="1" fill="#d000d8"/><rect x="14" y="13" width="1" height="1" fill="#a0a0a0"/></svg>
<div style="left:5px;top:341px;width:844px;height:275px;background:#ffffff;"></div>
<div style="left:5px;top:341px;width:844px;height:1px;background:#808080;"></div>
<div style="left:5px;top:341px;width:1px;height:275px;background:#808080;"></div>
<div style="left:6px;top:342px;width:842px;height:1px;background:#ffffff;"></div>
<div style="left:6px;top:342px;width:1px;height:273px;background:#ffffff;"></div>
<div style="left:6px;top:614px;width:842px;height:1px;background:#808080;"></div>
<div style="left:847px;top:342px;width:1px;height:273px;background:#808080;"></div>
<div style="left:5px;top:615px;width:844px;height:1px;background:#ffffff;"></div>
<div style="left:848px;top:341px;width:1px;height:275px;background:#ffffff;"></div>
<div style="left:7px;top:342px;width:840px;height:1px;background:#ffffff;"></div>
<div style="left:7px;top:343px;width:840px;height:15px;background:#d4d0c8;"></div>
<div style="left:7px;top:358px;width:840px;height:1px;background:#808080;"></div>
<div style="left:127px;top:343px;width:1px;height:16px;background:#808080;"></div>
<div style="left:128px;top:342px;width:1px;height:17px;background:#ffffff;"></div>
<div style="left:129px;top:343px;width:1px;height:16px;background:#808080;"></div>
<div style="left:130px;top:342px;width:1px;height:16px;background:#ffffff;"></div>
<div style="left:289px;top:343px;width:1px;height:16px;background:#808080;"></div>
<div style="left:290px;top:342px;width:1px;height:17px;background:#ffffff;"></div>
<div style="left:291px;top:343px;width:1px;height:16px;background:#808080;"></div>
<div style="left:292px;top:342px;width:1px;height:16px;background:#ffffff;"></div>
<div style="left:641px;top:343px;width:1px;height:16px;background:#808080;"></div>
<div style="left:642px;top:342px;width:1px;height:17px;background:#ffffff;"></div>
<div style="left:643px;top:343px;width:1px;height:16px;background:#808080;"></div>
<div style="left:644px;top:342px;width:1px;height:16px;background:#ffffff;"></div>
<div style="left:723px;top:343px;width:1px;height:16px;background:#808080;"></div>
<div style="left:724px;top:342px;width:1px;height:17px;background:#ffffff;"></div>
<div style="left:725px;top:343px;width:1px;height:16px;background:#808080;"></div>
<div style="left:726px;top:342px;width:1px;height:16px;background:#ffffff;"></div>
<div style="left:846px;top:343px;width:1px;height:16px;background:#808080;"></div>
<span class="ui hc" style="left:7px;width:120px;top:354px">Address</span>
<span class="ui hc" style="left:131px;width:158px;top:354px">Module</span>
<span class="ui hc" style="left:293px;width:348px;top:354px">Routine</span>
<span class="ui hc" style="left:645px;width:78px;top:354px">Source Line</span>
<span class="ui hc" style="left:727px;width:119px;top:354px">Source File</span>
<div style="left:849px;top:341px;width:16px;height:275px;background:#fff;background-image:conic-gradient(#d4d0c8 25%,#fff 0 50%,#d4d0c8 0 75%,#fff 0);background-size:2px 2px;"></div>
<div style="left:849px;top:341px;width:16px;height:16px;background:#d4d0c8;"></div>
<div style="left:849px;top:341px;width:15px;height:1px;background:#d4d0c8;"></div>
<div style="left:849px;top:341px;width:1px;height:15px;background:#d4d0c8;"></div>
<div style="left:850px;top:342px;width:13px;height:1px;background:#ffffff;"></div>
<div style="left:850px;top:342px;width:1px;height:13px;background:#ffffff;"></div>
<div style="left:850px;top:355px;width:14px;height:1px;background:#808080;"></div>
<div style="left:863px;top:342px;width:1px;height:14px;background:#808080;"></div>
<div style="left:849px;top:356px;width:16px;height:1px;background:#21336a;"></div>
<div style="left:864px;top:341px;width:1px;height:16px;background:#21336a;"></div>
<div style="left:849px;top:600px;width:16px;height:16px;background:#d4d0c8;"></div>
<div style="left:849px;top:600px;width:15px;height:1px;background:#d4d0c8;"></div>
<div style="left:849px;top:600px;width:1px;height:15px;background:#d4d0c8;"></div>
<div style="left:850px;top:601px;width:13px;height:1px;background:#ffffff;"></div>
<div style="left:850px;top:601px;width:1px;height:13px;background:#ffffff;"></div>
<div style="left:850px;top:614px;width:14px;height:1px;background:#808080;"></div>
<div style="left:863px;top:601px;width:1px;height:14px;background:#808080;"></div>
<div style="left:849px;top:615px;width:16px;height:1px;background:#21336a;"></div>
<div style="left:864px;top:600px;width:1px;height:16px;background:#21336a;"></div>
<div style="left:849px;top:357px;width:16px;height:61px;background:#d4d0c8;"></div>
<div style="left:849px;top:357px;width:15px;height:1px;background:#d4d0c8;"></div>
<div style="left:849px;top:357px;width:1px;height:60px;background:#d4d0c8;"></div>
<div style="left:850px;top:358px;width:13px;height:1px;background:#ffffff;"></div>
<div style="left:850px;top:358px;width:1px;height:58px;background:#ffffff;"></div>
<div style="left:850px;top:416px;width:14px;height:1px;background:#808080;"></div>
<div style="left:863px;top:358px;width:1px;height:59px;background:#808080;"></div>
<div style="left:849px;top:417px;width:16px;height:1px;background:#21336a;"></div>
<div style="left:864px;top:357px;width:1px;height:61px;background:#21336a;"></div>
<div style="left:856px;top:347px;width:1px;height:1px;background:#000;"></div>
<div style="left:856px;top:609px;width:1px;height:1px;background:#000;"></div>
<div style="left:855px;top:348px;width:3px;height:1px;background:#000;"></div>
<div style="left:855px;top:608px;width:3px;height:1px;background:#000;"></div>
<div style="left:854px;top:349px;width:5px;height:1px;background:#000;"></div>
<div style="left:854px;top:607px;width:5px;height:1px;background:#000;"></div>
<div style="left:853px;top:350px;width:7px;height:1px;background:#000;"></div>
<div style="left:853px;top:606px;width:7px;height:1px;background:#000;"></div>
<div style="left:7px;top:359px;width:840px;height:255px;overflow:hidden;background:#fff">
<div style="left:19px;top:1px;width:821px;height:1px;background:#dedad2;"></div>
<svg style="left:1px;top:3px" width="16" height="16" viewBox="0 0 16 16" shape-rendering="crispEdges"><rect width="16" height="16" fill="#000"/><rect width="15" height="15" fill="#808080"/><rect x="1" y="1" width="14" height="14" fill="#fff"/><rect x="1" y="1" width="14" height="2" fill="#0000ff"/><rect x="1" y="1" width="1" height="1" fill="#fff"/><rect x="11" y="1" width="2" height="1" fill="#fff"/><rect x="14" y="1" width="1" height="1" fill="#fff"/><rect x="2" y="5" width="13" height="10" fill="url(#ck)"/><rect x="3" y="11" width="2" height="2" fill="#fff"/><rect x="11" y="11" width="3" height="2" fill="#00ffff"/><rect x="7" y="11" width="2" height="2" fill="#fff"/></svg>
<span class="mo" style="left:27px;top:14px;color:#000;">0x46114C</span>
<span class="mo" style="left:130px;top:14px;color:#000;">d5nsample.exe</span>
<span class="mo" style="left:292px;top:14px;color:#000;">@Frmmain@TForm1@makeAVException</span>
<span class="mo" style="left:644px;top:14px;color:#000;">207</span>
<span class="mo" style="left:726px;top:14px;color:#000;">frmMain.pas</span>
<div style="left:19px;top:21px;width:821px;height:1px;background:#dedad2;"></div>
<svg style="left:1px;top:23px" width="16" height="16" viewBox="0 0 16 16" shape-rendering="crispEdges"><rect width="16" height="16" fill="#000"/><rect width="15" height="15" fill="#808080"/><rect x="1" y="1" width="14" height="14" fill="#fff"/><rect x="1" y="1" width="14" height="2" fill="#0000ff"/><rect x="1" y="1" width="1" height="1" fill="#fff"/><rect x="11" y="1" width="2" height="1" fill="#fff"/><rect x="14" y="1" width="1" height="1" fill="#fff"/><rect x="2" y="5" width="13" height="10" fill="url(#ck)"/><rect x="3" y="11" width="2" height="2" fill="#fff"/><rect x="11" y="11" width="3" height="2" fill="#00ffff"/><rect x="7" y="11" width="2" height="2" fill="#fff"/></svg>
<span class="mo" style="left:27px;top:34px;color:#000;">0x4613A0</span>
<span class="mo" style="left:130px;top:34px;color:#000;">d5nsample.exe</span>
<span class="mo" style="left:292px;top:34px;color:#000;">@Frmmain@TForm1@btnAVClick</span>
<span class="mo" style="left:644px;top:34px;color:#000;">267</span>
<span class="mo" style="left:726px;top:34px;color:#000;">frmMain.pas</span>
<div style="left:19px;top:41px;width:821px;height:1px;background:#dedad2;"></div>
<svg style="left:1px;top:43px" width="16" height="16" viewBox="0 0 16 16" shape-rendering="crispEdges"><rect width="16" height="16" fill="#000"/><rect width="15" height="15" fill="#808080"/><rect x="1" y="1" width="14" height="14" fill="#fff"/><rect x="1" y="1" width="14" height="2" fill="#0000ff"/><rect x="1" y="1" width="1" height="1" fill="#fff"/><rect x="11" y="1" width="2" height="1" fill="#fff"/><rect x="14" y="1" width="1" height="1" fill="#fff"/><rect x="2" y="5" width="13" height="10" fill="url(#ck)"/><rect x="3" y="11" width="2" height="2" fill="#fff"/><rect x="11" y="11" width="3" height="2" fill="#00ffff"/><rect x="7" y="11" width="2" height="2" fill="#fff"/></svg>
<span class="mo" style="left:27px;top:54px;color:#000;">0x431C89</span>
<span class="mo" style="left:130px;top:54px;color:#000;">d5nsample.exe</span>
<span class="mo" style="left:292px;top:54px;color:#000;">@Controls@TControl@Click</span>
<span class="mo" style="left:644px;top:54px;color:#000;">4279</span>
<span class="mo" style="left:726px;top:54px;color:#000;">Controls.pas</span>
<div style="left:19px;top:61px;width:821px;height:1px;background:#dedad2;"></div>
<svg style="left:1px;top:63px" width="16" height="16" viewBox="0 0 16 16" shape-rendering="crispEdges"><rect width="16" height="16" fill="#000"/><rect width="15" height="15" fill="#808080"/><rect x="1" y="1" width="14" height="14" fill="#fff"/><rect x="1" y="1" width="14" height="2" fill="#0000ff"/><rect x="1" y="1" width="1" height="1" fill="#fff"/><rect x="11" y="1" width="2" height="1" fill="#fff"/><rect x="14" y="1" width="1" height="1" fill="#fff"/><rect x="2" y="5" width="13" height="10" fill="url(#ck)"/><rect x="3" y="11" width="2" height="2" fill="#fff"/><rect x="11" y="11" width="3" height="2" fill="#00ffff"/><rect x="7" y="11" width="2" height="2" fill="#fff"/></svg>
<span class="mo" style="left:27px;top:74px;color:#000;">0x42A0B4</span>
<span class="mo" style="left:130px;top:74px;color:#000;">d5nsample.exe</span>
<span class="mo" style="left:292px;top:74px;color:#000;">@Stdctrls@TButton@Click</span>
<span class="mo" style="left:644px;top:74px;color:#000;">2882</span>
<span class="mo" style="left:726px;top:74px;color:#000;">StdCtrls.pas</span>
<div style="left:19px;top:81px;width:821px;height:1px;background:#dedad2;"></div>
<svg style="left:1px;top:83px" width="16" height="16" viewBox="0 0 16 16" shape-rendering="crispEdges"><rect width="16" height="16" fill="#000"/><rect width="15" height="15" fill="#808080"/><rect x="1" y="1" width="14" height="14" fill="#fff"/><rect x="1" y="1" width="14" height="2" fill="#0000ff"/><rect x="1" y="1" width="1" height="1" fill="#fff"/><rect x="11" y="1" width="2" height="1" fill="#fff"/><rect x="14" y="1" width="1" height="1" fill="#fff"/><rect x="2" y="5" width="13" height="10" fill="url(#ck)"/><rect x="3" y="11" width="2" height="2" fill="#fff"/><rect x="11" y="11" width="3" height="2" fill="#00ffff"/><rect x="7" y="11" width="2" height="2" fill="#fff"/></svg>
<span class="mo" style="left:27px;top:94px;color:#000;">0x42A21B</span>
<span class="mo" style="left:130px;top:94px;color:#000;">d5nsample.exe</span>
<span class="mo" style="left:292px;top:94px;color:#000;">@Stdctrls@TButton@CNCommand</span>
<span class="mo" style="left:644px;top:94px;color:#000;">2936</span>
<span class="mo" style="left:726px;top:94px;color:#000;">StdCtrls.pas</span>
<div style="left:19px;top:101px;width:821px;height:1px;background:#dedad2;"></div>
<svg style="left:1px;top:103px" width="16" height="16" viewBox="0 0 16 16" shape-rendering="crispEdges"><rect width="16" height="16" fill="#000"/><rect width="15" height="15" fill="#808080"/><rect x="1" y="1" width="14" height="14" fill="#fff"/><rect x="1" y="1" width="14" height="2" fill="#0000ff"/><rect x="1" y="1" width="1" height="1" fill="#fff"/><rect x="11" y="1" width="2" height="1" fill="#fff"/><rect x="14" y="1" width="1" height="1" fill="#fff"/><rect x="2" y="5" width="13" height="10" fill="url(#ck)"/><rect x="3" y="11" width="2" height="2" fill="#fff"/><rect x="11" y="11" width="3" height="2" fill="#00ffff"/><rect x="7" y="11" width="2" height="2" fill="#fff"/></svg>
<span class="mo" style="left:27px;top:114px;color:#000;">0x431A5E</span>
<span class="mo" style="left:130px;top:114px;color:#000;">d5nsample.exe</span>
<span class="mo" style="left:292px;top:114px;color:#000;">@Controls@TControl@WndProc</span>
<span class="mo" style="left:644px;top:114px;color:#000;">4190</span>
<span class="mo" style="left:726px;top:114px;color:#000;">Controls.pas</span>
<div style="left:20px;top:121px;width:820px;height:21px;background:#d4d0c8;"></div>
<div style="left:19px;top:121px;width:821px;height:1px;background:#dedad2;"></div>
<svg style="left:1px;top:123px" width="16" height="16" viewBox="0 0 16 16" shape-rendering="crispEdges"><rect width="16" height="16" fill="#000"/><rect width="15" height="15" fill="#808080"/><rect x="1" y="1" width="14" height="14" fill="#fff"/><rect x="1" y="1" width="14" height="2" fill="#0000ff"/><rect x="1" y="1" width="1" height="1" fill="#fff"/><rect x="11" y="1" width="2" height="1" fill="#fff"/><rect x="14" y="1" width="1" height="1" fill="#fff"/><rect x="2" y="5" width="13" height="10" fill="url(#ck)"/><rect x="3" y="11" width="2" height="2" fill="#fff"/><rect x="11" y="11" width="3" height="2" fill="#00ffff"/><rect x="7" y="11" width="2" height="2" fill="#fff"/></svg>
<span class="mo" style="left:27px;top:134px;color:#fff;-webkit-text-stroke:0;">0x435053</span>
<span class="mo" style="left:130px;top:134px;color:#fff;-webkit-text-stroke:0;">d5nsample.exe</span>
<span class="mo" style="left:292px;top:134px;color:#fff;-webkit-text-stroke:0;">@Controls@TWinControl@WndProc</span>
<span class="mo" style="left:644px;top:134px;color:#fff;-webkit-text-stroke:0;">5684</span>
<span class="mo" style="left:726px;top:134px;color:#fff;-webkit-text-stroke:0;">Controls.pas</span>
<div style="left:19px;top:141px;width:821px;height:1px;background:#dedad2;"></div>
<svg style="left:1px;top:143px" width="16" height="16" viewBox="0 0 16 16" shape-rendering="crispEdges"><rect width="16" height="16" fill="#000"/><rect width="15" height="15" fill="#808080"/><rect x="1" y="1" width="14" height="14" fill="#fff"/><rect x="1" y="1" width="14" height="2" fill="#0000ff"/><rect x="1" y="1" width="1" height="1" fill="#fff"/><rect x="11" y="1" width="2" height="1" fill="#fff"/><rect x="14" y="1" width="1" height="1" fill="#fff"/><rect x="2" y="5" width="13" height="10" fill="url(#ck)"/><rect x="3" y="11" width="2" height="2" fill="#fff"/><rect x="11" y="11" width="3" height="2" fill="#00ffff"/><rect x="7" y="11" width="2" height="2" fill="#fff"/></svg>
<span class="mo" style="left:27px;top:154px;color:#000;">0x429FFF</span>
<span class="mo" style="left:130px;top:154px;color:#000;">d5nsample.exe</span>
<span class="mo" style="left:292px;top:154px;color:#000;">@Stdctrls@TButtonControl@WndProc</span>
<span class="mo" style="left:644px;top:154px;color:#000;">2852</span>
<span class="mo" style="left:726px;top:154px;color:#000;">StdCtrls.pas</span>
<div style="left:19px;top:161px;width:821px;height:1px;background:#dedad2;"></div>
<svg style="left:1px;top:163px" width="16" height="16" viewBox="0 0 16 16" shape-rendering="crispEdges"><rect width="16" height="16" fill="#000"/><rect width="15" height="15" fill="#808080"/><rect x="1" y="1" width="14" height="14" fill="#fff"/><rect x="1" y="1" width="14" height="2" fill="#0000ff"/><rect x="1" y="1" width="1" height="1" fill="#fff"/><rect x="11" y="1" width="2" height="1" fill="#fff"/><rect x="14" y="1" width="1" height="1" fill="#fff"/><rect x="2" y="5" width="13" height="10" fill="url(#ck)"/><rect x="3" y="11" width="2" height="2" fill="#fff"/><rect x="11" y="11" width="3" height="2" fill="#00ffff"/><rect x="7" y="11" width="2" height="2" fill="#fff"/></svg>
<span class="mo" style="left:27px;top:174px;color:#000;">0x4317E1</span>
<span class="mo" style="left:130px;top:174px;color:#000;">d5nsample.exe</span>
<span class="mo" style="left:292px;top:174px;color:#000;">@Controls@TControl@Perform</span>
<span class="mo" style="left:644px;top:174px;color:#000;">4147</span>
<span class="mo" style="left:726px;top:174px;color:#000;">Controls.pas</span>
<div style="left:19px;top:181px;width:821px;height:1px;background:#dedad2;"></div>
<svg style="left:1px;top:183px" width="16" height="16" viewBox="0 0 16 16" shape-rendering="crispEdges"><rect width="16" height="16" fill="#000"/><rect width="15" height="15" fill="#808080"/><rect x="1" y="1" width="14" height="14" fill="#fff"/><rect x="1" y="1" width="14" height="2" fill="#0000ff"/><rect x="1" y="1" width="1" height="1" fill="#fff"/><rect x="11" y="1" width="2" height="1" fill="#fff"/><rect x="14" y="1" width="1" height="1" fill="#fff"/><rect x="2" y="5" width="13" height="10" fill="url(#ck)"/><rect x="3" y="11" width="2" height="2" fill="#fff"/><rect x="11" y="11" width="3" height="2" fill="#00ffff"/><rect x="7" y="11" width="2" height="2" fill="#fff"/></svg>
<span class="mo" style="left:27px;top:194px;color:#000;">0x4351FD</span>
<span class="mo" style="left:130px;top:194px;color:#000;">d5nsample.exe</span>
<span class="mo" style="left:292px;top:194px;color:#000;">@Controls@DoControlMsg</span>
<span class="mo" style="left:644px;top:194px;color:#000;">5768</span>
<span class="mo" style="left:726px;top:194px;color:#000;">Controls.pas</span>
<div style="left:19px;top:201px;width:821px;height:1px;background:#dedad2;"></div>
<svg style="left:1px;top:203px" width="16" height="16" viewBox="0 0 16 16" shape-rendering="crispEdges"><rect width="16" height="16" fill="#000"/><rect width="15" height="15" fill="#808080"/><rect x="1" y="1" width="14" height="14" fill="#fff"/><rect x="1" y="1" width="14" height="2" fill="#0000ff"/><rect x="1" y="1" width="1" height="1" fill="#fff"/><rect x="11" y="1" width="2" height="1" fill="#fff"/><rect x="14" y="1" width="1" height="1" fill="#fff"/><rect x="2" y="5" width="13" height="10" fill="url(#ck)"/><rect x="3" y="11" width="2" height="2" fill="#fff"/><rect x="11" y="11" width="3" height="2" fill="#00ffff"/><rect x="7" y="11" width="2" height="2" fill="#fff"/></svg>
<span class="mo" style="left:27px;top:214px;color:#000;">0x435832</span>
<span class="mo" style="left:130px;top:214px;color:#000;">d5nsample.exe</span>
<span class="mo" style="left:292px;top:214px;color:#000;">@Controls@TWinControl@WMCommand</span>
<span class="mo" style="left:644px;top:214px;color:#000;">5949</span>
<span class="mo" style="left:726px;top:214px;color:#000;">Controls.pas</span>
<div style="left:19px;top:221px;width:821px;height:1px;background:#dedad2;"></div>
<svg style="left:1px;top:223px" width="16" height="16" viewBox="0 0 16 16" shape-rendering="crispEdges"><rect width="16" height="16" fill="#000"/><rect width="15" height="15" fill="#808080"/><rect x="1" y="1" width="14" height="14" fill="#fff"/><rect x="1" y="1" width="14" height="2" fill="#0000ff"/><rect x="1" y="1" width="1" height="1" fill="#fff"/><rect x="11" y="1" width="2" height="1" fill="#fff"/><rect x="14" y="1" width="1" height="1" fill="#fff"/><rect x="2" y="5" width="13" height="10" fill="url(#ck)"/><rect x="3" y="11" width="2" height="2" fill="#fff"/><rect x="11" y="11" width="3" height="2" fill="#00ffff"/><rect x="7" y="11" width="2" height="2" fill="#fff"/></svg>
<span class="mo" style="left:27px;top:234px;color:#000;">0x44F5B1</span>
<span class="mo" style="left:130px;top:234px;color:#000;">d5nsample.exe</span>
<span class="mo" style="left:292px;top:234px;color:#000;">@Forms@TCustomForm@WMCommand</span>
<span class="mo" style="left:644px;top:234px;color:#000;">4005</span>
<span class="mo" style="left:726px;top:234px;color:#000;">Forms.pas</span>
<div style="left:19px;top:241px;width:821px;height:1px;background:#dedad2;"></div>
<svg style="left:1px;top:243px" width="16" height="16" viewBox="0 0 16 16" shape-rendering="crispEdges"><rect width="16" height="16" fill="#000"/><rect width="15" height="15" fill="#808080"/><rect x="1" y="1" width="14" height="14" fill="#fff"/><rect x="1" y="1" width="14" height="2" fill="#0000ff"/><rect x="1" y="1" width="1" height="1" fill="#fff"/><rect x="11" y="1" width="2" height="1" fill="#fff"/><rect x="14" y="1" width="1" height="1" fill="#fff"/><rect x="2" y="5" width="13" height="10" fill="url(#ck)"/><rect x="3" y="11" width="2" height="2" fill="#fff"/><rect x="11" y="11" width="3" height="2" fill="#00ffff"/><rect x="7" y="11" width="2" height="2" fill="#fff"/></svg>
<span class="mo" style="left:27px;top:254px;color:#000;">0x431A5E</span>
<span class="mo" style="left:130px;top:254px;color:#000;">d5nsample.exe</span>
<span class="mo" style="left:292px;top:254px;color:#000;">@Controls@TControl@WndProc</span>
<span class="mo" style="left:644px;top:254px;color:#000;">4190</span>
<span class="mo" style="left:726px;top:254px;color:#000;">Controls.pas</span>
<div style="left:19px;top:1px;width:1px;height:255px;background:#dedad2;"></div>
<div style="left:122px;top:1px;width:1px;height:255px;background:#dedad2;"></div>
<div style="left:284px;top:1px;width:1px;height:255px;background:#dedad2;"></div>
<div style="left:636px;top:1px;width:1px;height:255px;background:#dedad2;"></div>
<div style="left:718px;top:1px;width:1px;height:255px;background:#dedad2;"></div>
<div style="left:839px;top:1px;width:1px;height:255px;background:#dedad2;"></div>
</div>
<div style="left:5px;top:616px;width:860px;height:1px;background:#808080;"></div>
<div style="left:5px;top:616px;width:1px;height:23px;background:#808080;"></div>
<div style="left:6px;top:617px;width:858px;height:1px;background:#ffffff;"></div>
<div style="left:6px;top:617px;width:1px;height:21px;background:#ffffff;"></div>
<div style="left:6px;top:637px;width:858px;height:1px;background:#808080;"></div>
<div style="left:863px;top:617px;width:1px;height:21px;background:#808080;"></div>
<div style="left:5px;top:638px;width:860px;height:1px;background:#ffffff;"></div>
<div style="left:864px;top:616px;width:1px;height:23px;background:#ffffff;"></div>
</div>
</body></html>
